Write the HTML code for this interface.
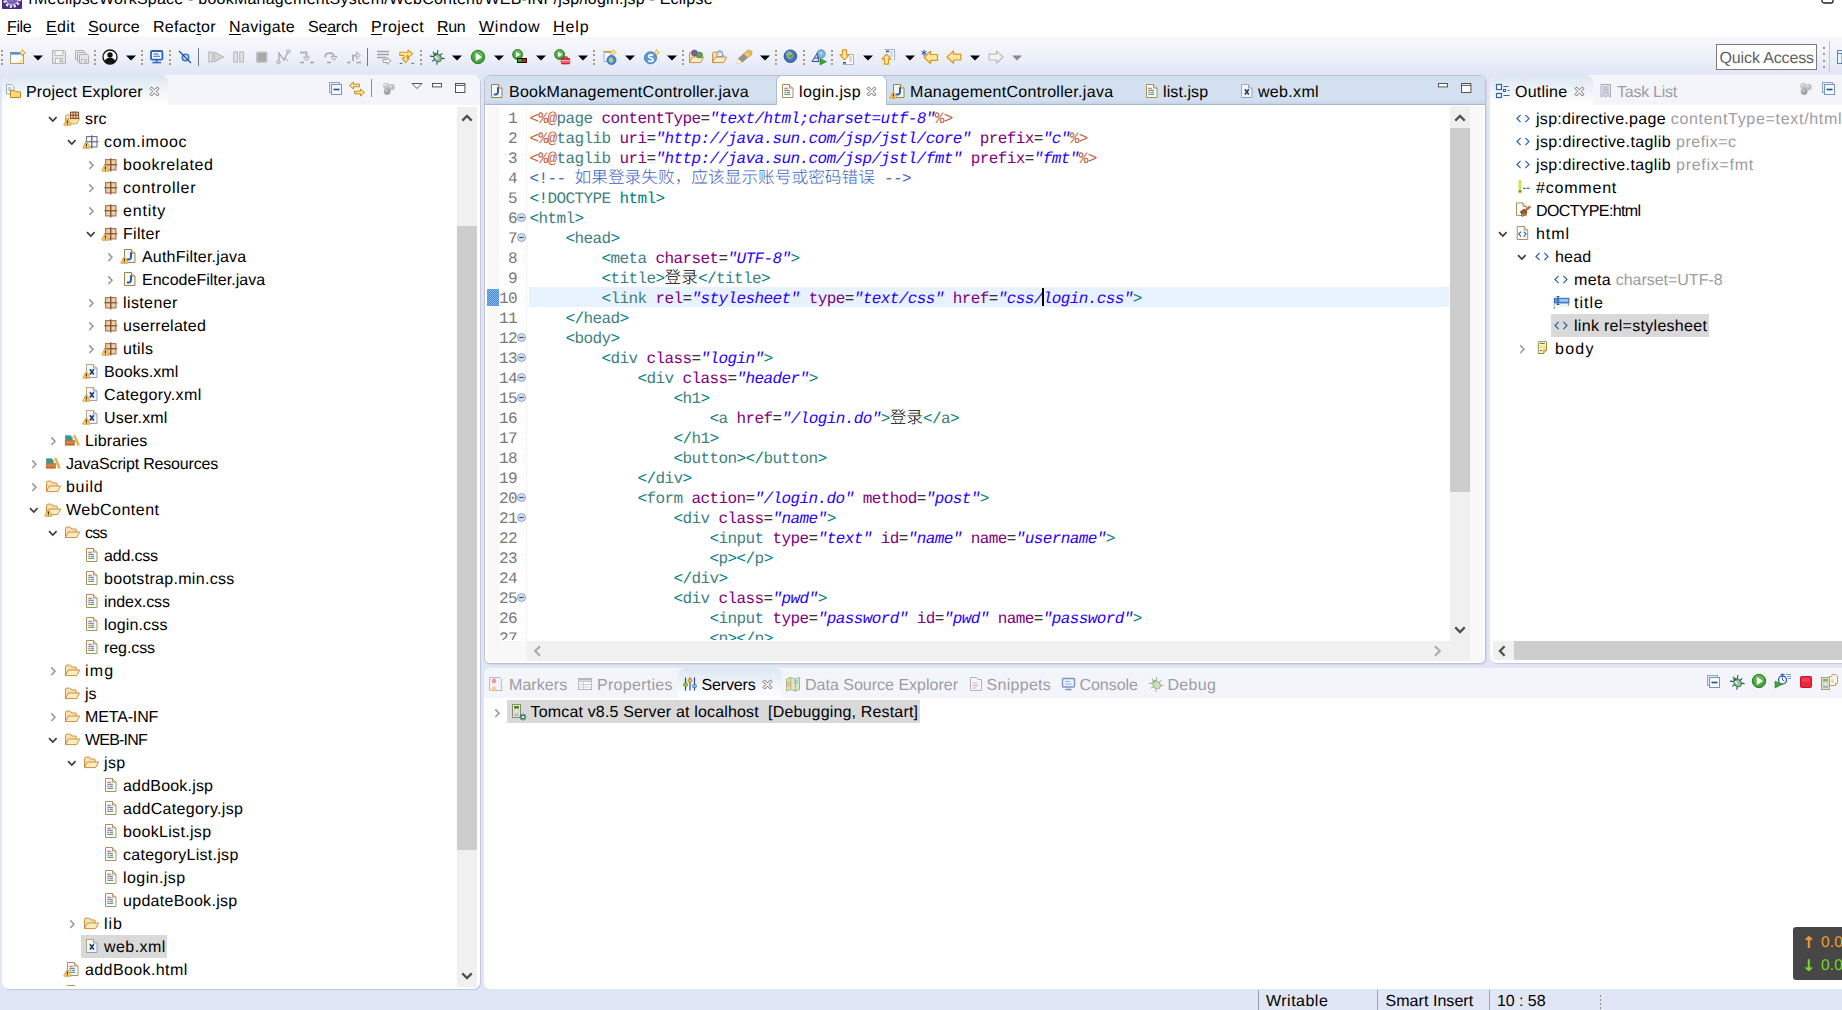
<!DOCTYPE html><html lang="zh"><head><meta charset="utf-8"><title>Eclipse</title><style>
*{box-sizing:border-box;margin:0;padding:0}
html,body{width:1842px;height:1010px;overflow:hidden}
body{background:#E1E6F6;font-family:"Liberation Sans","Noto Sans CJK SC",sans-serif;font-size:16px;letter-spacing:.1px;color:#000;position:relative;text-rendering:geometricPrecision}
.a{position:absolute}
.t{position:absolute;white-space:pre;line-height:20px;height:20px}
.g{color:#9C9CA2}
.ic{position:absolute;width:16px;height:16px;overflow:visible}
svg{display:block;overflow:visible}
u{text-decoration:underline;text-underline-offset:2px;text-decoration-thickness:1px}
.code{position:absolute;left:529.5px;white-space:pre;font-family:"Liberation Mono","Noto Sans CJK SC",monospace;font-size:16px;letter-spacing:-.6px;line-height:20px;height:20px}
.ln{position:absolute;left:487px;width:30px;text-align:right;font-family:"Liberation Mono","Noto Sans CJK SC",monospace;font-size:16px;letter-spacing:-.6px;line-height:20px;height:20px;color:#787878}
.d{color:#BF5F3F} .n{color:#3F7F7F} .k{color:#7F007F} .v{color:#2A00FF;font-style:italic} .b{color:#008080} .c{color:#3F5FBF}
.cj{font-family:"Liberation Mono","Noto Sans CJK SC",sans-serif;font-size:16.7px;letter-spacing:0;font-weight:300}
</style></head><body>
<div class="a" style="left:0px;top:0px;width:1842px;height:37px;background:#fff"></div>
<div class="a" style="left:2px;top:-9px;width:20px;height:18px"><svg width="20" height="18" viewBox="0 0 20 18"><rect x="0" y="0" width="20" height="18" rx="1" fill="#4B2E83"/><circle cx="10" cy="8" r="7.6" fill="none" stroke="#F2F0F8" stroke-width="2.6" stroke-dasharray="2.2 1.78"/><circle cx="10" cy="8" r="6.4" fill="#D8D3EA"/><circle cx="10" cy="8" r="5.6" fill="#7A64B4"/><circle cx="9" cy="6.5" r="3.4" fill="#9A88CC" opacity=".7"/></svg></div>
<div class="t " style="left:28.5px;top:-10.5px;font-size:16px;letter-spacing:0.225px;">rMeclipseWorkSpace - bookManagementSystem/WebContent/WEB-INF/jsp/login.jsp - Eclipse</div>
<div class="a" style="left:1821px;top:-8px;width:14px;height:12px"><svg width="14" height="12" viewBox="0 0 14 12"><rect x="1" y="1" width="11" height="10" rx="2" fill="#fff" stroke="#222" stroke-width="1.3"/></svg></div>
<div class="t " style="left:7px;top:17.5px;;letter-spacing:-0.399px;"><u>F</u>ile</div>
<div class="t " style="left:46px;top:17.5px;;letter-spacing:0.341px;"><u>E</u>dit</div>
<div class="t " style="left:88px;top:17.5px;;letter-spacing:0.179px;"><u>S</u>ource</div>
<div class="t " style="left:153px;top:17.5px;;letter-spacing:0.302px;">Refac<u>t</u>or</div>
<div class="t " style="left:229px;top:17.5px;;letter-spacing:0.349px;"><u>N</u>avigate</div>
<div class="t " style="left:308px;top:17.5px;;letter-spacing:-0.224px;">Se<u>a</u>rch</div>
<div class="t " style="left:371px;top:17.5px;;letter-spacing:0.467px;"><u>P</u>roject</div>
<div class="t " style="left:437px;top:17.5px;;letter-spacing:-0.38px;"><u>R</u>un</div>
<div class="t " style="left:479px;top:17.5px;;letter-spacing:0.736px;"><u>W</u>indow</div>
<div class="t " style="left:553px;top:17.5px;;letter-spacing:0.893px;"><u>H</u>elp</div>
<div class="a" style="left:0px;top:37px;width:1842px;height:38px;background:linear-gradient(#F6F7FC,#F3F5FB 30%,#E1E6F6)"></div>
<div class="a" style="left:1px;top:50px;width:2px;height:16px;background:repeating-linear-gradient(#A89B7E 0 2px,transparent 2px 4.35px)"></div>
<div class="a" style="left:10px;top:49px;width:16px;height:16px"><svg width="16" height="16" viewBox="0 0 16 16"><rect x="0.5" y="3.5" width="13" height="11" fill="#FDFEFF" stroke="#B89F62" stroke-width="1"/><rect x="0.5" y="3.2" width="13" height="2.4" fill="#4A90D9"/><path d="M3 14c5-.5 9-3 10-8v8Z" fill="#FBE9B0"/><path d="M12.5 0.5l1 2.3 2.3 1-2.3 1-1 2.3-1-2.3-2.3-1 2.3-1Z" fill="#FFF6C8" stroke="#D9A21B" stroke-width=".9"/></svg></div>
<div class="a" style="left:33px;top:55px;width:10px;height:6px"><svg width="10" height="6" viewBox="0 0 10 6"><path d="M0 0.5h10L5 5.5Z" fill="#000"/></svg></div>
<div class="a" style="left:51px;top:49px;width:16px;height:16px"><svg width="16" height="16" viewBox="0 0 16 16"><path d="M1.5 1.5h12l1 1v12h-13Z" fill="#E6E6E6" stroke="#B2B2B2" stroke-width="1"/><rect x="4" y="1.5" width="8" height="5" fill="#F4F4F4" stroke="#B2B2B2" stroke-width=".8"/><rect x="4.5" y="9.5" width="7" height="5" fill="#F4F4F4" stroke="#B2B2B2" stroke-width=".8"/><rect x="8.5" y="10.5" width="2" height="3" fill="#B2B2B2"/></svg></div>
<div class="a" style="left:74px;top:49px;width:16px;height:16px"><svg width="16" height="16" viewBox="0 0 16 16"><path d="M1.5 1.5h8l1 1v8h-9Z" fill="#E9E9E9" stroke="#B2B2B2" stroke-width="1"/><path d="M3.5 3.5h8l1 1v8h-9Z" fill="#E9E9E9" stroke="#B2B2B2" stroke-width="1"/><path d="M5.5 5.5h8l1 1v8h-9Z" fill="#E6E6E6" stroke="#B2B2B2" stroke-width="1"/><rect x="7.5" y="10.5" width="5" height="4" fill="#F4F4F4" stroke="#B2B2B2" stroke-width=".8"/><rect x="10" y="11.5" width="1.5" height="2.5" fill="#B2B2B2"/></svg></div>
<div class="a" style="left:94px;top:50px;width:2px;height:16px;background:repeating-linear-gradient(#A89B7E 0 2px,transparent 2px 4.35px)"></div>
<div class="a" style="left:102px;top:49px;width:16px;height:16px"><svg width="16" height="16" viewBox="0 0 16 16"><circle cx="8" cy="8" r="7" fill="#fff" stroke="#111" stroke-width="1.3"/><circle cx="8" cy="6" r="2.7" fill="#111"/><path d="M2.6 12.2c1-2.6 3-3.4 5.4-3.4s4.4.8 5.4 3.4c-1.4 1.8-3.2 2.6-5.4 2.6s-4-.8-5.4-2.6Z" fill="#111"/></svg></div>
<div class="a" style="left:126px;top:55px;width:10px;height:6px"><svg width="10" height="6" viewBox="0 0 10 6"><path d="M0 0.5h10L5 5.5Z" fill="#000"/></svg></div>
<div class="a" style="left:141px;top:50px;width:2px;height:16px;background:repeating-linear-gradient(#A89B7E 0 2px,transparent 2px 4.35px)"></div>
<div class="a" style="left:149px;top:49px;width:16px;height:16px"><svg width="16" height="16" viewBox="0 0 16 16"><rect x="2" y="2" width="11.4" height="8.6" rx="1.2" fill="#F4F8FF" stroke="#2F64B8" stroke-width="1.8"/><path d="M4.5 5h5M4.5 7.3h6.5" stroke="#2F64B8" stroke-width="1.1"/><path d="M7.7 10.6v2" stroke="#2F64B8" stroke-width="2"/><path d="M3.4 13.6h8.6" stroke="#2F64B8" stroke-width="1.5"/></svg></div>
<div class="a" style="left:169px;top:50px;width:2px;height:16px;background:repeating-linear-gradient(#A89B7E 0 2px,transparent 2px 4.35px)"></div>
<div class="a" style="left:177px;top:49px;width:16px;height:16px"><svg width="16" height="16" viewBox="0 0 16 16"><circle cx="8.5" cy="8.5" r="3.2" fill="#DCE8F8" stroke="#3C78C0" stroke-width="1.6"/><path d="M2 2l12 12" stroke="#2B4FA0" stroke-width="1.3"/></svg></div>
<div class="a" style="left:198px;top:48px;width:1px;height:18px;background:#767687"></div>
<div class="a" style="left:208px;top:49px;width:16px;height:16px"><svg width="16" height="16" viewBox="0 0 16 16"><rect x="0.8" y="3" width="3.4" height="10" fill="#E4E4E4" stroke="#B2B2B2" stroke-width="1"/><path d="M6 3l9.5 5L6 13Z" fill="#D5D5D5" stroke="#B2B2B2" stroke-width="1"/></svg></div>
<div class="a" style="left:233px;top:49px;width:12px;height:16px"><svg width="12" height="16" viewBox="0 0 12 16"><rect x="0.8" y="3" width="3.6" height="10" fill="#E4E4E4" stroke="#B2B2B2" stroke-width="1"/><rect x="6.8" y="3" width="3.6" height="10" fill="#E4E4E4" stroke="#B2B2B2" stroke-width="1"/></svg></div>
<div class="a" style="left:256px;top:49px;width:12px;height:16px"><svg width="12" height="16" viewBox="0 0 12 16"><rect x="0.8" y="3.3" width="10" height="10" rx="1" fill="#A9A9A9" stroke="#C4C4C4" stroke-width="1.4"/></svg></div>
<div class="a" style="left:276px;top:49px;width:16px;height:16px"><svg width="16" height="16" viewBox="0 0 16 16"><path d="M3 12V4l5 7 4-8" fill="none" stroke="#A2A2A2" stroke-width="1.2"/><circle cx="2.5" cy="13" r="1.8" fill="#D8D8D8" stroke="#A2A2A2" stroke-width=".8"/><circle cx="12.5" cy="2.5" r="1.8" fill="#D8D8D8" stroke="#A2A2A2" stroke-width=".8"/><path d="M9 9l3 3" stroke="#A2A2A2" stroke-width="1"/></svg></div>
<div class="a" style="left:299px;top:49px;width:16px;height:16px"><svg width="16" height="16" viewBox="0 0 16 16"><path d="M1 3.5h6.5v5" fill="none" stroke="#B2B2B2" stroke-width="2"/><path d="M4.5 8h6l-3 4Z" fill="#E4E4E4" stroke="#B2B2B2" stroke-width="1"/><path d="M1 13.5h4M11 13.5h4" stroke="#A2A2A2" stroke-width="1.4"/></svg></div>
<div class="a" style="left:323px;top:49px;width:16px;height:16px"><svg width="16" height="16" viewBox="0 0 16 16"><path d="M2 8.5c0-6 9-6 9-.5" fill="none" stroke="#B2B2B2" stroke-width="2"/><path d="M8 7.5h6l-3 4Z" fill="#E4E4E4" stroke="#B2B2B2" stroke-width="1"/><path d="M4 13.5h4" stroke="#A2A2A2" stroke-width="1.4"/></svg></div>
<div class="a" style="left:346px;top:49px;width:16px;height:16px"><svg width="16" height="16" viewBox="0 0 16 16"><path d="M7 12V6.5h4" fill="none" stroke="#B2B2B2" stroke-width="2"/><path d="M10.5 3l4 3.5-4 3.5Z" fill="#E4E4E4" stroke="#B2B2B2" stroke-width="1"/><path d="M1 13.5h3.5M10.5 13.5h4.5" stroke="#A2A2A2" stroke-width="1.4"/></svg></div>
<div class="a" style="left:367px;top:48px;width:1px;height:18px;background:#767687"></div>
<div class="a" style="left:376px;top:49px;width:16px;height:16px"><svg width="16" height="16" viewBox="0 0 16 16"><path d="M1 2.5h12M1 5.5h12M1 8.5h9" stroke="#A2A2A2" stroke-width="1.5"/><path d="M7 10.5h4V8.5l4 3.5-4 3.5v-2H7Z" fill="#F4F4F4" stroke="#A2A2A2" stroke-width="1"/></svg></div>
<div class="a" style="left:399px;top:49px;width:16px;height:16px"><svg width="16" height="16" viewBox="0 0 16 16"><path d="M0.8 3.2h8.2V1l4.6 3.8L9 8.6V6.4H8.1v2.8h2.2L6.6 13.6 2.9 9.2h2.2V6.4H0.8Z" fill="#FCE7A6" stroke="#D9981E" stroke-width="1.1" stroke-linejoin="round"/><path d="M0.3 14.8q1.6-2 3.4 0ZM12 14.8q1.6-2 3.4 0Z" fill="#2B4FA0"/></svg></div>
<div class="a" style="left:420px;top:50px;width:2px;height:16px;background:repeating-linear-gradient(#A89B7E 0 2px,transparent 2px 4.35px)"></div>
<div class="a" style="left:429px;top:49px;width:16px;height:16px"><svg width="16" height="16" viewBox="0 0 16 16"><g transform="rotate(-38 8 8)"><path d="M3 3l3 3M13 3l-3 3M1.5 8.5h3.5M14.5 8.5H11M3 14l3-3M13 14l-3-3M8 1.5v3" stroke="#1F5A55" stroke-width="1.1"/><ellipse cx="8" cy="9" rx="3.3" ry="4.3" fill="#9DBF8E" stroke="#2F6B5E" stroke-width="1"/><circle cx="8" cy="4.8" r="1.6" fill="#2F6B5E"/><ellipse cx="7" cy="8" rx="1.2" ry="2.2" fill="#D7F0C8"/></g></svg></div>
<div class="a" style="left:451.5px;top:55px;width:10px;height:6px"><svg width="10" height="6" viewBox="0 0 10 6"><path d="M0 0.5h10L5 5.5Z" fill="#000"/></svg></div>
<div class="a" style="left:470px;top:49px;width:16px;height:16px"><svg width="16" height="16" viewBox="0 0 16 16"><circle cx="8" cy="8" r="6.7" fill="#46A33C" stroke="#2B7A2B" stroke-width="1"/><circle cx="8" cy="6.6" r="4.7" fill="#7BCF63" opacity=".5"/><path d="M5.8 3.7L12 8l-6.2 4.3Z" fill="#fff"/></svg></div>
<div class="a" style="left:493.5px;top:55px;width:10px;height:6px"><svg width="10" height="6" viewBox="0 0 10 6"><path d="M0 0.5h10L5 5.5Z" fill="#000"/></svg></div>
<div class="a" style="left:511px;top:49px;width:18px;height:16px"><svg width="18" height="16" viewBox="0 0 18 16"><circle cx="6.6" cy="5.5" r="5" fill="#46A33C" stroke="#2B7A2B" stroke-width=".9"/><circle cx="6.6" cy="4.6" r="3.4" fill="#7BCF63" opacity=".5"/><path d="M5 2.8L9.6 5.5 5 8.2Z" fill="#fff"/><rect x="6" y="9" width="10" height="5" fill="#111"/><rect x="7" y="10" width="3.8" height="3" fill="#1FB82A"/><rect x="11.3" y="10" width="3.8" height="3" fill="#E8141C"/></svg></div>
<div class="a" style="left:535.5px;top:55px;width:10px;height:6px"><svg width="10" height="6" viewBox="0 0 10 6"><path d="M0 0.5h10L5 5.5Z" fill="#000"/></svg></div>
<div class="a" style="left:553px;top:49px;width:18px;height:16px"><svg width="18" height="16" viewBox="0 0 18 16"><circle cx="6.6" cy="5.5" r="5" fill="#46A33C" stroke="#2B7A2B" stroke-width=".9"/><circle cx="6.6" cy="4.6" r="3.4" fill="#7BCF63" opacity=".5"/><path d="M5 2.8L9.6 5.5 5 8.2Z" fill="#fff"/><rect x="8.3" y="9.3" width="8.4" height="5.6" rx="1" fill="#E8283C" stroke="#B8101E" stroke-width=".8"/><path d="M10.8 9.3v-1.4h3.4v1.4" fill="none" stroke="#B8101E" stroke-width="1"/><path d="M8.3 11.6h8.4" stroke="#fff" stroke-width=".8"/><path d="M8.3 13.2h8.4" stroke="#fff" stroke-width=".5"/></svg></div>
<div class="a" style="left:577.5px;top:55px;width:10px;height:6px"><svg width="10" height="6" viewBox="0 0 10 6"><path d="M0 0.5h10L5 5.5Z" fill="#000"/></svg></div>
<div class="a" style="left:593px;top:50px;width:2px;height:16px;background:repeating-linear-gradient(#A89B7E 0 2px,transparent 2px 4.35px)"></div>
<div class="a" style="left:601px;top:49px;width:16px;height:16px"><svg width="16" height="16" viewBox="0 0 16 16"><path d="M3 3.5h7v9H3Z" fill="#F4F7FD" stroke="#9FB2D4" stroke-width="1" rx="2"/><path d="M2 2.5h8" stroke="#D9A21B" stroke-width="1.2"/><circle cx="10.5" cy="11" r="4.5" fill="#4F86D8" stroke="#2F5FA8" stroke-width=".8"/><path d="M8 9.5c1-1.5 3-1 3.5 0s1.5 2 0 3.5-3 .5-3.5-1Z" fill="#A6D86C"/><path d="M12.5 0.5l.9 2 2 .9-2 .9-.9 2-.9-2-2-.9 2-.9Z" fill="#FFF2B0" stroke="#D9A21B" stroke-width=".7"/></svg></div>
<div class="a" style="left:624.5px;top:55px;width:10px;height:6px"><svg width="10" height="6" viewBox="0 0 10 6"><path d="M0 0.5h10L5 5.5Z" fill="#000"/></svg></div>
<div class="a" style="left:644px;top:49px;width:16px;height:16px"><svg width="16" height="16" viewBox="0 0 16 16"><circle cx="6.5" cy="8.8" r="6.1" fill="#5A9AD8" stroke="#3A78B8" stroke-width=".8"/><path d="M8.9 6.6c-1-1-4.3-1.1-4.3.9 0 1.9 4.5 1.2 4.5 3.3 0 2.1-3.8 1.9-4.9.8" fill="none" stroke="#fff" stroke-width="1.7"/><path d="M12.6 0.6l.9 2 2 .9-2 .9-.9 2-.9-2-2-.9 2-.9Z" fill="#FFF6C8" stroke="#D9A21B" stroke-width=".8"/></svg></div>
<div class="a" style="left:666.5px;top:55px;width:10px;height:6px"><svg width="10" height="6" viewBox="0 0 10 6"><path d="M0 0.5h10L5 5.5Z" fill="#000"/></svg></div>
<div class="a" style="left:682px;top:50px;width:2px;height:16px;background:repeating-linear-gradient(#A89B7E 0 2px,transparent 2px 4.35px)"></div>
<div class="a" style="left:687px;top:49px;width:18px;height:16px"><svg width="18" height="16" viewBox="0 0 18 16"><path d="M2.5 13.5V4.7q0-1.6 1.6-1.6h2.6q1 0 1.5.9l.6 1h3.4q1.1 0 1.1 1.1V8" fill="#F9E2AF" stroke="#CF8F3F" stroke-width="1" stroke-linejoin="round"/><path d="M2.4 13.6L5.4 8H16.7L13.6 13.6Z" fill="#FCEBC3" stroke="#CF8F3F" stroke-width="1" stroke-linejoin="round"/><circle cx="7.5" cy="4" r="3" fill="#7A5DB0" stroke="#523A85" stroke-width=".6"/><circle cx="12.5" cy="6" r="3" fill="#5FA35A" stroke="#36743A" stroke-width=".6"/></svg></div>
<div class="a" style="left:710px;top:49px;width:18px;height:16px"><svg width="18" height="16" viewBox="0 0 18 16"><path d="M2.5 13.5V4.7q0-1.6 1.6-1.6h2.6q1 0 1.5.9l.6 1h3.4q1.1 0 1.1 1.1V8" fill="#F9E2AF" stroke="#CF8F3F" stroke-width="1" stroke-linejoin="round"/><path d="M2.4 13.6L5.4 8H16.7L13.6 13.6Z" fill="#FCEBC3" stroke="#CF8F3F" stroke-width="1" stroke-linejoin="round"/><rect x="7" y="3" width="5.5" height="4.5" fill="#E4E9F4" stroke="#8A96B4" stroke-width=".9"/><path d="M8.5 3V1.8h2.5V3" fill="none" stroke="#8A96B4" stroke-width=".9"/></svg></div>
<div class="a" style="left:735px;top:49px;width:18px;height:16px"><svg width="18" height="16" viewBox="0 0 18 16"><path d="M1 15l2.5-5.5 4 3.5Z" fill="#FFF7D8" stroke="#E6CF8A" stroke-width=".6"/><path d="M3.5 9.5l5-4.5 4 3.5-5 4.5Z" fill="#9A948A" stroke="#77716A" stroke-width=".6"/><path d="M8.5 5l5-4 3.5 1.5-.5 3.5-4 2.5Z" fill="#F2C879" stroke="#C58A2E" stroke-width=".8"/><path d="M12.5 3l2.5 1.5" stroke="#C58A2E" stroke-width=".8"/></svg></div>
<div class="a" style="left:759.5px;top:55px;width:10px;height:6px"><svg width="10" height="6" viewBox="0 0 10 6"><path d="M0 0.5h10L5 5.5Z" fill="#000"/></svg></div>
<div class="a" style="left:775px;top:50px;width:2px;height:16px;background:repeating-linear-gradient(#A89B7E 0 2px,transparent 2px 4.35px)"></div>
<div class="a" style="left:783px;top:49px;width:16px;height:16px"><svg width="16" height="16" viewBox="0 0 16 16"><circle cx="7.4" cy="7.2" r="6.3" fill="#3F78C8" stroke="#2A4E8A" stroke-width=".9"/><circle cx="6" cy="5" r="3" fill="#8FB6EA" opacity=".6"/><path d="M4.5 4.5c1.5-2 4-1.5 4.5 0s2 2.5 0 4.5-3.5 1-4.5-1-1-2 0-3.5Z" fill="#8FCB5A"/><path d="M6.3 5.8l1.2 3 1.2-3" fill="none" stroke="#C8401E" stroke-width="1"/></svg></div>
<div class="a" style="left:803px;top:50px;width:2px;height:16px;background:repeating-linear-gradient(#A89B7E 0 2px,transparent 2px 4.35px)"></div>
<div class="a" style="left:811px;top:49px;width:16px;height:16px"><svg width="16" height="16" viewBox="0 0 16 16"><circle cx="10" cy="5" r="4.2" fill="#7FB2E8" stroke="#4C7FC0" stroke-width=".8"/><path d="M8.5 3.5c1-1.2 2.6-.8 3 .4s-.6 2.6-2 2.4Z" fill="#B6DD8A"/><path d="M1 12.5l5-8 2 8Z" fill="#DDE6F8" stroke="#2B4FA0" stroke-width="1"/><path d="M3 9h5" stroke="#2B4FA0" stroke-width="1"/><path d="M9 9.5l6.5 3.2L9 16Z" fill="#3FA535" stroke="#1E7A1E" stroke-width=".6"/></svg></div>
<div class="a" style="left:831px;top:50px;width:2px;height:16px;background:repeating-linear-gradient(#A89B7E 0 2px,transparent 2px 4.35px)"></div>
<div class="a" style="left:839px;top:49px;width:16px;height:16px"><svg width="16" height="16" viewBox="0 0 16 16"><path d="M5.5 5.5h9v10h-11" fill="#FAFCFF" stroke="#9FB2D4" stroke-width="1"/><path d="M10 8h3M10 10h3M10 12h3" stroke="#9FB2D4" stroke-width=".9"/><rect x="4" y="13" width="3" height="1.6" fill="#2B4FA0"/><path d="M3.5 0.8h4v5h2.5l-4.5 5-4.5-5h2.5Z" fill="#FCE7A6" stroke="#D9981E" stroke-width="1.2" stroke-linejoin="round"/></svg></div>
<div class="a" style="left:862.5px;top:55px;width:10px;height:6px"><svg width="10" height="6" viewBox="0 0 10 6"><path d="M0 0.5h10L5 5.5Z" fill="#000"/></svg></div>
<div class="a" style="left:881px;top:49px;width:16px;height:16px"><svg width="16" height="16" viewBox="0 0 16 16"><path d="M3.5 0.5h10v11" fill="#FAFCFF" stroke="#9FB2D4" stroke-width="1"/><path d="M8.5 3h3.5M8.5 5h3.5M8.5 7h3.5" stroke="#9FB2D4" stroke-width=".9"/><rect x="5" y="1.6" width="3" height="1.6" fill="#2B4FA0"/><path d="M3.5 15.2h4v-5h2.5l-4.5-5-4.5 5h2.5Z" fill="#FCE7A6" stroke="#D9981E" stroke-width="1.2" stroke-linejoin="round"/></svg></div>
<div class="a" style="left:904.5px;top:55px;width:10px;height:6px"><svg width="10" height="6" viewBox="0 0 10 6"><path d="M0 0.5h10L5 5.5Z" fill="#000"/></svg></div>
<div class="a" style="left:921px;top:49px;width:18px;height:16px"><svg width="18" height="16" viewBox="0 0 18 16"><path d="M3 8.3L9.5 2.2V5.5h7v5.8h-7v3.2Z" fill="#FCE7A6" stroke="#D9981E" stroke-width="1.2" stroke-linejoin="round"/><path d="M3 0.8v6M0.5 2.3l5 3M5.5 2.3l-5 3" stroke="#2B4FA0" stroke-width="1"/></svg></div>
<div class="a" style="left:946px;top:49px;width:16px;height:16px"><svg width="16" height="16" viewBox="0 0 16 16"><path d="M1 8L7.5 1.9V5.2h7.3v5.8H7.5v3.2Z" fill="#FCE7A6" stroke="#D9981E" stroke-width="1.2" stroke-linejoin="round"/></svg></div>
<div class="a" style="left:969.5px;top:55px;width:10px;height:6px"><svg width="10" height="6" viewBox="0 0 10 6"><path d="M0 0.5h10L5 5.5Z" fill="#000"/></svg></div>
<div class="a" style="left:988px;top:49px;width:16px;height:16px"><svg width="16" height="16" viewBox="0 0 16 16"><path d="M15 8L8.5 1.9V5.2H1.2v5.8h7.3v3.2Z" fill="#F4F4F4" stroke="#BDBDBD" stroke-width="1.2" stroke-linejoin="round"/></svg></div>
<div class="a" style="left:1011.5px;top:55px;width:10px;height:6px"><svg width="10" height="6" viewBox="0 0 10 6"><path d="M0 0.5h10L5 5.5Z" fill="#8a8a8a"/></svg></div>
<div class="a" style="left:1823px;top:47px;width:2px;height:21px;background:repeating-linear-gradient(#A89B7E 0 2px,transparent 2px 6.3px)"></div>
<div class="a" style="left:1829px;top:41px;width:1px;height:31px;background:#C2C9DA"></div>
<div class="a" style="left:1837px;top:49px;width:16px;height:16px"><svg width="16" height="16" viewBox="0 0 16 16"><rect x="0.5" y="1.5" width="14" height="13" fill="#EEF3FB" stroke="#5F7FB8" stroke-width="1"/><path d="M0.5 4.5h14M5 4.5v10" stroke="#5F7FB8" stroke-width="1"/></svg></div>
<div class="a" style="left:1716px;top:44px;width:101px;height:26px;background:#fff;border:1px solid #7a7a7a"></div>
<div class="t " style="left:1719.5px;top:48.5px;color:#5f5f5f;letter-spacing:-0.13px;">Quick Access</div>
<div class="a" style="left:2px;top:75px;width:478px;height:914px;background:#fff;border-radius:7px 7px 7px 7px;box-shadow:1px 1px 1px rgba(150,160,190,.45)"></div>
<div class="a" style="left:2px;top:75px;width:478px;height:30px;background:#F4F5FB;border-radius:7px 7px 0 0"></div>
<div class="a" style="left:2px;top:75px;width:166px;height:30px;background:linear-gradient(#DCE6F1,#EDF2F8 45%,#fff);border-radius:7px 7px 0 0"></div>
<div class="a" style="left:484px;top:75px;width:1002px;height:589px;background:#fff;border-radius:6px;border:1px solid #C0C1C6;box-shadow:1px 1px 1px rgba(160,165,185,.25)"></div>
<div class="a" style="left:485px;top:76px;width:1000px;height:29px;background:linear-gradient(#D3E0EF 85%,#C4D3E6);border-radius:5px 5px 0 0;border-bottom:1px solid #A9B7CD"></div>
<div class="a" style="left:1490px;top:75px;width:360px;height:588px;background:#fff;border-radius:7px;box-shadow:1px 1px 1px rgba(150,160,190,.45)"></div>
<div class="a" style="left:1490px;top:75px;width:360px;height:30px;background:#F4F5FB;border-radius:7px 0 0 0"></div>
<div class="a" style="left:1490px;top:75px;width:103px;height:30px;background:linear-gradient(#DCE6F1,#EDF2F8 45%,#fff);border-radius:7px 7px 0 0"></div>
<div class="a" style="left:484px;top:668px;width:1366px;height:321px;background:#fff;border-radius:7px"></div>
<div class="a" style="left:484px;top:668px;width:1366px;height:30px;background:#F4F5FB;border-radius:7px 0 0 0"></div>
<div class="a" style="left:678px;top:668px;width:104px;height:30px;background:linear-gradient(#DCE6F1,#EDF2F8 45%,#fff);border-radius:7px 7px 0 0"></div>
<div class="a" style="left:4px;top:83px;width:18px;height:16px"><svg width="18" height="16" viewBox="0 0 18 16"><path d="M2.5 1.5h5l2.5 2.5v7h-7.5Z" fill="#fff" stroke="#9AA9C4" stroke-width="1"/><path d="M4 5h3M4 7h4" stroke="#7C97C9" stroke-width="1"/><path d="M6.5 14.5v-7h4l1 1.3h5v5.7Z" fill="#FAD97A" stroke="#C58A16" stroke-width="1" stroke-linejoin="round"/></svg></div>
<div class="t " style="left:26px;top:82.5px;;letter-spacing:0.185px;">Project Explorer</div>
<div class="a" style="left:149px;top:86px;width:12px;height:12px"><svg width="12" height="12" viewBox="0 0 12 12"><path d="M1 2.6L2.6 1L5.5 3.9L8.4 1L10 2.6L7.1 5.5L10 8.4L8.4 10L5.5 7.1L2.6 10L1 8.4L3.9 5.5Z" fill="#fff" stroke="#585858" stroke-width=".9" stroke-linejoin="round"/></svg></div>
<div class="a" style="left:327px;top:81px;width:16px;height:16px"><svg width="16" height="16" viewBox="0 0 16 16"><rect x="2.5" y="1.5" width="10" height="10" fill="#E8EEF8" stroke="#8FA5C7" stroke-width="1"/><rect x="4.5" y="3.5" width="10" height="10" fill="#F6F9FF" stroke="#7A93BC" stroke-width="1"/><path d="M6.5 8.5h6" stroke="#1F4E8C" stroke-width="1.6"/></svg></div>
<div class="a" style="left:348px;top:81px;width:18px;height:16px"><svg width="18" height="16" viewBox="0 0 18 16"><path d="M1.5 4.5L5.5 1v2.2h6v2.6h-6V8Z" fill="#FCE7A6" stroke="#C58A16" stroke-width="1" stroke-linejoin="round"/><path d="M16.5 11.5L12.5 8v2.2h-6v2.6h6V15Z" fill="#FCE7A6" stroke="#C58A16" stroke-width="1" stroke-linejoin="round"/></svg></div>
<div class="a" style="left:371px;top:79px;width:1px;height:18px;background:#8c8c9c"></div>
<div class="a" style="left:381px;top:81px;width:16px;height:16px"><svg width="16" height="16" viewBox="0 0 16 16"><circle cx="5.2" cy="4.8" r="3.1" fill="#C6C6C6"/><circle cx="4.4" cy="3.9" r="1.3" fill="#E2E2E2"/><circle cx="10.6" cy="6.2" r="3.1" fill="#BEBEBE"/><circle cx="9.8" cy="5.3" r="1.3" fill="#DCDCDC"/><circle cx="6.2" cy="10.6" r="3.4" fill="#A4A4A4"/><circle cx="5.3" cy="9.6" r="1.4" fill="#C8C8C8"/></svg></div>
<div class="a" style="left:411px;top:82px;width:12px;height:8px"><svg width="12" height="8" viewBox="0 0 12 8"><path d="M1 1.5h10L6 6.5Z" fill="#fff" stroke="#555" stroke-width="1"/></svg></div>
<div class="a" style="left:432px;top:83px;width:12px;height:6px"><svg width="12" height="6" viewBox="0 0 12 6"><rect x="0.5" y="0.5" width="9" height="3.4" fill="#fff" stroke="#555" stroke-width="1"/></svg></div>
<div class="a" style="left:455px;top:83px;width:12px;height:12px"><svg width="12" height="12" viewBox="0 0 12 12"><rect x="0.5" y="0.5" width="9.4" height="9" fill="#fff" stroke="#555" stroke-width="1"/><path d="M0.5 2.4h9.4" stroke="#555" stroke-width="1"/></svg></div>
<div class="a" style="left:2px;top:105px;width:455px;height:881px;overflow:hidden">
<div class="a" style="left:45px;top:8px;width:12px;height:10px"><svg width="12" height="10" viewBox="0 0 12 10"><path d="M2 4.2L5.8 8L9.6 4.2" fill="none" stroke="#3C3C3C" stroke-width="1.7"/></svg></div>
<div class="a" style="left:61px;top:5px;width:16px;height:16px"><svg width="18" height="16" viewBox="0 0 18 16"><path d="M2.5 13.5V6.2q0-1.2 1.2-1.2h3" fill="#F6DDA6" stroke="#D7A55B" stroke-width="1"/><path d="M2.4 13.8L5.6 8H17L13.6 13.8Z" fill="#F8DFA6" stroke="#D9A75C" stroke-width="1" stroke-linejoin="round"/><rect x="7.5" y="2.2" width="8" height="6.3" fill="#EED3A4" stroke="#8A4B32" stroke-width="1"/><path d="M10.2 1.4v7.4M12.8 1.4v7.4M6.8 5.2h9.4" stroke="#7C4A3A" stroke-width="1"/><path d="M1.3 15.3Q.4 15.3 .9 14.4L3.8 8.9Q4.4 7.9 5 8.9L7.9 14.4Q8.4 15.3 7.5 15.3Z" fill="#F7CC72" stroke="#D7A046" stroke-width=".9"/><path d="M4.4 10.4v2.5M4.4 13.6v.9" stroke="#3F2E05" stroke-width="1.1"/></svg></div>
<div class="t " style="left:83px;top:4.5px;;letter-spacing:0.136px;">src</div>
<div class="a" style="left:64px;top:31px;width:12px;height:10px"><svg width="12" height="10" viewBox="0 0 12 10"><path d="M2 4.2L5.8 8L9.6 4.2" fill="none" stroke="#3C3C3C" stroke-width="1.7"/></svg></div>
<div class="a" style="left:80px;top:28px;width:16px;height:16px"><svg width="17" height="16" viewBox="0 0 17 16"><rect x="4.5" y="3.5" width="10.5" height="10.5" fill="#E3ECF8" stroke="#6F7686" stroke-width="1"/><rect x="5.6" y="4.6" width="3.4" height="3.4" fill="#F4F8FD"/><rect x="10.6" y="4.6" width="3.4" height="3.4" fill="#F4F8FD"/><rect x="5.6" y="9.6" width="3.4" height="3.4" fill="#F4F8FD"/><rect x="10.6" y="9.6" width="3.4" height="3.4" fill="#F4F8FD"/><path d="M9.75 2.2v13.2M3.2 8.75h13.2" stroke="#5A6070" stroke-width="1.2"/><path d="M1.3 15.3Q.4 15.3 .9 14.4L3.8 8.9Q4.4 7.9 5 8.9L7.9 14.4Q8.4 15.3 7.5 15.3Z" fill="#F7CC72" stroke="#D7A046" stroke-width=".9"/><path d="M4.4 10.4v2.5M4.4 13.6v.9" stroke="#3F2E05" stroke-width="1.1"/></svg></div>
<div class="t " style="left:102px;top:27.5px;;letter-spacing:0.655px;">com.imooc</div>
<div class="a" style="left:84px;top:53px;width:10px;height:12px"><svg width="10" height="12" viewBox="0 0 10 12"><path d="M3.3 3.4L7 7.2L3.3 11" fill="none" stroke="#9A9A9A" stroke-width="1.6"/></svg></div>
<div class="a" style="left:99px;top:51px;width:16px;height:16px"><svg width="17" height="16" viewBox="0 0 17 16"><rect x="4.5" y="3.5" width="10.5" height="10.5" fill="#D9B27C" stroke="#A9775A" stroke-width="1"/><rect x="5.6" y="4.6" width="3.4" height="3.4" fill="#EBD2A4"/><rect x="10.6" y="4.6" width="3.4" height="3.4" fill="#EBD2A4"/><rect x="5.6" y="9.6" width="3.4" height="3.4" fill="#EBD2A4"/><rect x="10.6" y="9.6" width="3.4" height="3.4" fill="#EBD2A4"/><path d="M9.75 2.2v13.2M3.2 8.75h13.2" stroke="#7C4A3A" stroke-width="1.2"/><path d="M1.3 15.3Q.4 15.3 .9 14.4L3.8 8.9Q4.4 7.9 5 8.9L7.9 14.4Q8.4 15.3 7.5 15.3Z" fill="#F7CC72" stroke="#D7A046" stroke-width=".9"/><path d="M4.4 10.4v2.5M4.4 13.6v.9" stroke="#3F2E05" stroke-width="1.1"/></svg></div>
<div class="t " style="left:121px;top:50.5px;;letter-spacing:0.638px;">bookrelated</div>
<div class="a" style="left:84px;top:76px;width:10px;height:12px"><svg width="10" height="12" viewBox="0 0 10 12"><path d="M3.3 3.4L7 7.2L3.3 11" fill="none" stroke="#9A9A9A" stroke-width="1.6"/></svg></div>
<div class="a" style="left:99px;top:74px;width:16px;height:16px"><svg width="17" height="16" viewBox="0 0 17 16"><rect x="4.5" y="3.5" width="10.5" height="10.5" fill="#D9B27C" stroke="#A9775A" stroke-width="1"/><rect x="5.6" y="4.6" width="3.4" height="3.4" fill="#EBD2A4"/><rect x="10.6" y="4.6" width="3.4" height="3.4" fill="#EBD2A4"/><rect x="5.6" y="9.6" width="3.4" height="3.4" fill="#EBD2A4"/><rect x="10.6" y="9.6" width="3.4" height="3.4" fill="#EBD2A4"/><path d="M9.75 2.2v13.2M3.2 8.75h13.2" stroke="#7C4A3A" stroke-width="1.2"/></svg></div>
<div class="t " style="left:121px;top:73.5px;;letter-spacing:0.754px;">controller</div>
<div class="a" style="left:84px;top:99px;width:10px;height:12px"><svg width="10" height="12" viewBox="0 0 10 12"><path d="M3.3 3.4L7 7.2L3.3 11" fill="none" stroke="#9A9A9A" stroke-width="1.6"/></svg></div>
<div class="a" style="left:99px;top:97px;width:16px;height:16px"><svg width="17" height="16" viewBox="0 0 17 16"><rect x="4.5" y="3.5" width="10.5" height="10.5" fill="#D9B27C" stroke="#A9775A" stroke-width="1"/><rect x="5.6" y="4.6" width="3.4" height="3.4" fill="#EBD2A4"/><rect x="10.6" y="4.6" width="3.4" height="3.4" fill="#EBD2A4"/><rect x="5.6" y="9.6" width="3.4" height="3.4" fill="#EBD2A4"/><rect x="10.6" y="9.6" width="3.4" height="3.4" fill="#EBD2A4"/><path d="M9.75 2.2v13.2M3.2 8.75h13.2" stroke="#7C4A3A" stroke-width="1.2"/></svg></div>
<div class="t " style="left:121px;top:96.5px;;letter-spacing:0.81px;">entity</div>
<div class="a" style="left:83px;top:123px;width:12px;height:10px"><svg width="12" height="10" viewBox="0 0 12 10"><path d="M2 4.2L5.8 8L9.6 4.2" fill="none" stroke="#3C3C3C" stroke-width="1.7"/></svg></div>
<div class="a" style="left:99px;top:120px;width:16px;height:16px"><svg width="17" height="16" viewBox="0 0 17 16"><rect x="4.5" y="3.5" width="10.5" height="10.5" fill="#D9B27C" stroke="#A9775A" stroke-width="1"/><rect x="5.6" y="4.6" width="3.4" height="3.4" fill="#EBD2A4"/><rect x="10.6" y="4.6" width="3.4" height="3.4" fill="#EBD2A4"/><rect x="5.6" y="9.6" width="3.4" height="3.4" fill="#EBD2A4"/><rect x="10.6" y="9.6" width="3.4" height="3.4" fill="#EBD2A4"/><path d="M9.75 2.2v13.2M3.2 8.75h13.2" stroke="#7C4A3A" stroke-width="1.2"/><path d="M1.3 15.3Q.4 15.3 .9 14.4L3.8 8.9Q4.4 7.9 5 8.9L7.9 14.4Q8.4 15.3 7.5 15.3Z" fill="#F7CC72" stroke="#D7A046" stroke-width=".9"/><path d="M4.4 10.4v2.5M4.4 13.6v.9" stroke="#3F2E05" stroke-width="1.1"/></svg></div>
<div class="t " style="left:121px;top:119.5px;;letter-spacing:0.307px;">Filter</div>
<div class="a" style="left:103px;top:145px;width:10px;height:12px"><svg width="10" height="12" viewBox="0 0 10 12"><path d="M3.3 3.4L7 7.2L3.3 11" fill="none" stroke="#9A9A9A" stroke-width="1.6"/></svg></div>
<div class="a" style="left:118px;top:143px;width:16px;height:16px"><svg width="16" height="16" viewBox="0 0 16 16"><path d="M4.5 1.5h7l3.5 3.5v9.5h-10.5Z" fill="#F3F7FD" stroke="#9C8347" stroke-width="1" stroke-linejoin="round"/><path d="M11.5 1.5v3.5h3.5" fill="#F4E9C8" stroke="#9C8347" stroke-width="1" stroke-linejoin="round"/><path d="M11 4.2v4.6c0 2.2-1.6 3-4.2 2.6" fill="none" stroke="#2F5D9E" stroke-width="2"/><path d="M1.3 15.3Q.4 15.3 .9 14.4L3.8 8.9Q4.4 7.9 5 8.9L7.9 14.4Q8.4 15.3 7.5 15.3Z" fill="#F7CC72" stroke="#D7A046" stroke-width=".9"/><path d="M4.4 10.4v2.5M4.4 13.6v.9" stroke="#3F2E05" stroke-width="1.1"/></svg></div>
<div class="t " style="left:140px;top:142.5px;;letter-spacing:0.194px;">AuthFilter.java</div>
<div class="a" style="left:103px;top:168px;width:10px;height:12px"><svg width="10" height="12" viewBox="0 0 10 12"><path d="M3.3 3.4L7 7.2L3.3 11" fill="none" stroke="#9A9A9A" stroke-width="1.6"/></svg></div>
<div class="a" style="left:118px;top:166px;width:16px;height:16px"><svg width="16" height="16" viewBox="0 0 16 16"><path d="M4.5 1.5h7l3.5 3.5v9.5h-10.5Z" fill="#F3F7FD" stroke="#9C8347" stroke-width="1" stroke-linejoin="round"/><path d="M11.5 1.5v3.5h3.5" fill="#F4E9C8" stroke="#9C8347" stroke-width="1" stroke-linejoin="round"/><path d="M11 4.2v4.6c0 2.2-1.6 3-4.2 2.6" fill="none" stroke="#2F5D9E" stroke-width="2"/></svg></div>
<div class="t " style="left:140px;top:165.5px;;letter-spacing:0.023px;">EncodeFilter.java</div>
<div class="a" style="left:84px;top:191px;width:10px;height:12px"><svg width="10" height="12" viewBox="0 0 10 12"><path d="M3.3 3.4L7 7.2L3.3 11" fill="none" stroke="#9A9A9A" stroke-width="1.6"/></svg></div>
<div class="a" style="left:99px;top:189px;width:16px;height:16px"><svg width="17" height="16" viewBox="0 0 17 16"><rect x="4.5" y="3.5" width="10.5" height="10.5" fill="#D9B27C" stroke="#A9775A" stroke-width="1"/><rect x="5.6" y="4.6" width="3.4" height="3.4" fill="#EBD2A4"/><rect x="10.6" y="4.6" width="3.4" height="3.4" fill="#EBD2A4"/><rect x="5.6" y="9.6" width="3.4" height="3.4" fill="#EBD2A4"/><rect x="10.6" y="9.6" width="3.4" height="3.4" fill="#EBD2A4"/><path d="M9.75 2.2v13.2M3.2 8.75h13.2" stroke="#7C4A3A" stroke-width="1.2"/></svg></div>
<div class="t " style="left:121px;top:188.5px;;letter-spacing:0.389px;">listener</div>
<div class="a" style="left:84px;top:214px;width:10px;height:12px"><svg width="10" height="12" viewBox="0 0 10 12"><path d="M3.3 3.4L7 7.2L3.3 11" fill="none" stroke="#9A9A9A" stroke-width="1.6"/></svg></div>
<div class="a" style="left:99px;top:212px;width:16px;height:16px"><svg width="17" height="16" viewBox="0 0 17 16"><rect x="4.5" y="3.5" width="10.5" height="10.5" fill="#D9B27C" stroke="#A9775A" stroke-width="1"/><rect x="5.6" y="4.6" width="3.4" height="3.4" fill="#EBD2A4"/><rect x="10.6" y="4.6" width="3.4" height="3.4" fill="#EBD2A4"/><rect x="5.6" y="9.6" width="3.4" height="3.4" fill="#EBD2A4"/><rect x="10.6" y="9.6" width="3.4" height="3.4" fill="#EBD2A4"/><path d="M9.75 2.2v13.2M3.2 8.75h13.2" stroke="#7C4A3A" stroke-width="1.2"/></svg></div>
<div class="t " style="left:121px;top:211.5px;;letter-spacing:0.285px;">userrelated</div>
<div class="a" style="left:84px;top:237px;width:10px;height:12px"><svg width="10" height="12" viewBox="0 0 10 12"><path d="M3.3 3.4L7 7.2L3.3 11" fill="none" stroke="#9A9A9A" stroke-width="1.6"/></svg></div>
<div class="a" style="left:99px;top:235px;width:16px;height:16px"><svg width="17" height="16" viewBox="0 0 17 16"><rect x="4.5" y="3.5" width="10.5" height="10.5" fill="#D9B27C" stroke="#A9775A" stroke-width="1"/><rect x="5.6" y="4.6" width="3.4" height="3.4" fill="#EBD2A4"/><rect x="10.6" y="4.6" width="3.4" height="3.4" fill="#EBD2A4"/><rect x="5.6" y="9.6" width="3.4" height="3.4" fill="#EBD2A4"/><rect x="10.6" y="9.6" width="3.4" height="3.4" fill="#EBD2A4"/><path d="M9.75 2.2v13.2M3.2 8.75h13.2" stroke="#7C4A3A" stroke-width="1.2"/><path d="M1.3 15.3Q.4 15.3 .9 14.4L3.8 8.9Q4.4 7.9 5 8.9L7.9 14.4Q8.4 15.3 7.5 15.3Z" fill="#F7CC72" stroke="#D7A046" stroke-width=".9"/><path d="M4.4 10.4v2.5M4.4 13.6v.9" stroke="#3F2E05" stroke-width="1.1"/></svg></div>
<div class="t " style="left:121px;top:234.5px;;letter-spacing:0.387px;">utils</div>
<div class="a" style="left:80px;top:258px;width:16px;height:16px"><svg width="16" height="16" viewBox="0 0 16 16"><path d="M4.5 1.5h7l3.5 3.5v9.5h-10.5Z" fill="#F2F6FC" stroke="#93A0C0" stroke-width="1" stroke-linejoin="round"/><path d="M11.5 1.5v3.5h3.5" fill="#F1E8C8" stroke="#93A0C0" stroke-width="1" stroke-linejoin="round"/><path d="M4.5 14.5V1.5h7" fill="none" stroke="#B9AC7C" stroke-width="1"/><path d="M7.9 6.3l3.9 5.3M11.8 6.3l-3.9 5.3" stroke="#25416F" stroke-width="1.7"/><path d="M1.3 15.3Q.4 15.3 .9 14.4L3.8 8.9Q4.4 7.9 5 8.9L7.9 14.4Q8.4 15.3 7.5 15.3Z" fill="#F7CC72" stroke="#D7A046" stroke-width=".9"/><path d="M4.4 10.4v2.5M4.4 13.6v.9" stroke="#3F2E05" stroke-width="1.1"/></svg></div>
<div class="t " style="left:102px;top:257.5px;;letter-spacing:0.063px;">Books.xml</div>
<div class="a" style="left:80px;top:281px;width:16px;height:16px"><svg width="16" height="16" viewBox="0 0 16 16"><path d="M4.5 1.5h7l3.5 3.5v9.5h-10.5Z" fill="#F2F6FC" stroke="#93A0C0" stroke-width="1" stroke-linejoin="round"/><path d="M11.5 1.5v3.5h3.5" fill="#F1E8C8" stroke="#93A0C0" stroke-width="1" stroke-linejoin="round"/><path d="M4.5 14.5V1.5h7" fill="none" stroke="#B9AC7C" stroke-width="1"/><path d="M7.9 6.3l3.9 5.3M11.8 6.3l-3.9 5.3" stroke="#25416F" stroke-width="1.7"/><path d="M1.3 15.3Q.4 15.3 .9 14.4L3.8 8.9Q4.4 7.9 5 8.9L7.9 14.4Q8.4 15.3 7.5 15.3Z" fill="#F7CC72" stroke="#D7A046" stroke-width=".9"/><path d="M4.4 10.4v2.5M4.4 13.6v.9" stroke="#3F2E05" stroke-width="1.1"/></svg></div>
<div class="t " style="left:102px;top:280.5px;;letter-spacing:0.376px;">Category.xml</div>
<div class="a" style="left:80px;top:304px;width:16px;height:16px"><svg width="16" height="16" viewBox="0 0 16 16"><path d="M4.5 1.5h7l3.5 3.5v9.5h-10.5Z" fill="#F2F6FC" stroke="#93A0C0" stroke-width="1" stroke-linejoin="round"/><path d="M11.5 1.5v3.5h3.5" fill="#F1E8C8" stroke="#93A0C0" stroke-width="1" stroke-linejoin="round"/><path d="M4.5 14.5V1.5h7" fill="none" stroke="#B9AC7C" stroke-width="1"/><path d="M7.9 6.3l3.9 5.3M11.8 6.3l-3.9 5.3" stroke="#25416F" stroke-width="1.7"/><path d="M1.3 15.3Q.4 15.3 .9 14.4L3.8 8.9Q4.4 7.9 5 8.9L7.9 14.4Q8.4 15.3 7.5 15.3Z" fill="#F7CC72" stroke="#D7A046" stroke-width=".9"/><path d="M4.4 10.4v2.5M4.4 13.6v.9" stroke="#3F2E05" stroke-width="1.1"/></svg></div>
<div class="t " style="left:102px;top:303.5px;;letter-spacing:0.167px;">User.xml</div>
<div class="a" style="left:46px;top:329px;width:10px;height:12px"><svg width="10" height="12" viewBox="0 0 10 12"><path d="M3.3 3.4L7 7.2L3.3 11" fill="none" stroke="#9A9A9A" stroke-width="1.6"/></svg></div>
<div class="a" style="left:61px;top:327px;width:16px;height:16px"><svg width="18" height="16" viewBox="0 0 18 16"><rect x="2.2" y="3.4" width="6" height="1.5" fill="#1E86CC"/><rect x="2.6" y="5.1" width="6.6" height="3" fill="#3A9C7E" stroke="#2B7D62" stroke-width=".5"/><rect x="2.2" y="8.6" width="9.2" height="4.6" fill="#C9743C" stroke="#A85A28" stroke-width=".6"/><path d="M2.4 10.3h8.8" stroke="#E19A63" stroke-width=".8"/><path d="M11.2 3.2l4.4 10.3" stroke="#E8A838" stroke-width="2.4"/><path d="M10.4 3.6l4.4 10.3" stroke="#F6CF7A" stroke-width=".8"/></svg></div>
<div class="t " style="left:83px;top:326.5px;;letter-spacing:0.118px;">Libraries</div>
<div class="a" style="left:27px;top:352px;width:10px;height:12px"><svg width="10" height="12" viewBox="0 0 10 12"><path d="M3.3 3.4L7 7.2L3.3 11" fill="none" stroke="#9A9A9A" stroke-width="1.6"/></svg></div>
<div class="a" style="left:42px;top:350px;width:16px;height:16px"><svg width="18" height="16" viewBox="0 0 18 16"><rect x="2.2" y="3.4" width="6" height="1.5" fill="#1E86CC"/><rect x="2.6" y="5.1" width="6.6" height="3" fill="#3A9C7E" stroke="#2B7D62" stroke-width=".5"/><rect x="2.2" y="8.6" width="9.2" height="4.6" fill="#C9743C" stroke="#A85A28" stroke-width=".6"/><path d="M2.4 10.3h8.8" stroke="#E19A63" stroke-width=".8"/><path d="M11.2 3.2l4.4 10.3" stroke="#E8A838" stroke-width="2.4"/><path d="M10.4 3.6l4.4 10.3" stroke="#F6CF7A" stroke-width=".8"/></svg></div>
<div class="t " style="left:64px;top:349.5px;;letter-spacing:-0.18px;">JavaScript Resources</div>
<div class="a" style="left:27px;top:375px;width:10px;height:12px"><svg width="10" height="12" viewBox="0 0 10 12"><path d="M3.3 3.4L7 7.2L3.3 11" fill="none" stroke="#9A9A9A" stroke-width="1.6"/></svg></div>
<div class="a" style="left:42px;top:373px;width:16px;height:16px"><svg width="18" height="16" viewBox="0 0 18 16"><path d="M2.5 13.5V4.7q0-1.6 1.6-1.6h2.6q1 0 1.5.9l.6 1h3.4q1.1 0 1.1 1.1V8" fill="#F9E2AF" stroke="#CF8F3F" stroke-width="1" stroke-linejoin="round"/><path d="M2.4 13.6L5.4 8H16.7L13.6 13.6Z" fill="#FCEBC3" stroke="#CF8F3F" stroke-width="1" stroke-linejoin="round"/></svg></div>
<div class="t " style="left:64px;top:372.5px;;letter-spacing:0.697px;">build</div>
<div class="a" style="left:26px;top:399px;width:12px;height:10px"><svg width="12" height="10" viewBox="0 0 12 10"><path d="M2 4.2L5.8 8L9.6 4.2" fill="none" stroke="#3C3C3C" stroke-width="1.7"/></svg></div>
<div class="a" style="left:42px;top:396px;width:16px;height:16px"><svg width="18" height="16" viewBox="0 0 18 16"><path d="M2.5 13.5V4.7q0-1.6 1.6-1.6h2.6q1 0 1.5.9l.6 1h3.4q1.1 0 1.1 1.1V8" fill="#F9E2AF" stroke="#CF8F3F" stroke-width="1" stroke-linejoin="round"/><path d="M2.4 13.6L5.4 8H16.7L13.6 13.6Z" fill="#FCEBC3" stroke="#CF8F3F" stroke-width="1" stroke-linejoin="round"/><path d="M1.3 15.3Q.4 15.3 .9 14.4L3.8 8.9Q4.4 7.9 5 8.9L7.9 14.4Q8.4 15.3 7.5 15.3Z" fill="#F7CC72" stroke="#D7A046" stroke-width=".9"/><path d="M4.4 10.4v2.5M4.4 13.6v.9" stroke="#3F2E05" stroke-width="1.1"/></svg></div>
<div class="t " style="left:64px;top:395.5px;;letter-spacing:0.483px;">WebContent</div>
<div class="a" style="left:45px;top:422px;width:12px;height:10px"><svg width="12" height="10" viewBox="0 0 12 10"><path d="M2 4.2L5.8 8L9.6 4.2" fill="none" stroke="#3C3C3C" stroke-width="1.7"/></svg></div>
<div class="a" style="left:61px;top:419px;width:16px;height:16px"><svg width="18" height="16" viewBox="0 0 18 16"><path d="M2.5 13.5V4.7q0-1.6 1.6-1.6h2.6q1 0 1.5.9l.6 1h3.4q1.1 0 1.1 1.1V8" fill="#F9E2AF" stroke="#CF8F3F" stroke-width="1" stroke-linejoin="round"/><path d="M2.4 13.6L5.4 8H16.7L13.6 13.6Z" fill="#FCEBC3" stroke="#CF8F3F" stroke-width="1" stroke-linejoin="round"/></svg></div>
<div class="t " style="left:83px;top:418.5px;;letter-spacing:-0.8px;">css</div>
<div class="a" style="left:80px;top:442px;width:16px;height:16px"><svg width="16" height="16" viewBox="0 0 16 16"><path d="M4.5 1.5h7l3.5 3.5v9.5h-10.5Z" fill="#FFFEFA" stroke="#A2945C" stroke-width="1" stroke-linejoin="round"/><path d="M11.5 1.5v3.5h3.5" fill="#EFE6C4" stroke="#A2945C" stroke-width="1" stroke-linejoin="round"/><path d="M6.3 5.2h3.5M6.3 9.2h2" stroke="#E0484E" stroke-width="1.1"/><path d="M6.3 7.2h5.6M9 9.2h3" stroke="#4D6FB3" stroke-width="1.1"/><path d="M6.3 11.3h6" stroke="#3E9A5B" stroke-width="1.1"/></svg></div>
<div class="t " style="left:102px;top:441.5px;;letter-spacing:-0.19px;">add.css</div>
<div class="a" style="left:80px;top:465px;width:16px;height:16px"><svg width="16" height="16" viewBox="0 0 16 16"><path d="M4.5 1.5h7l3.5 3.5v9.5h-10.5Z" fill="#FFFEFA" stroke="#A2945C" stroke-width="1" stroke-linejoin="round"/><path d="M11.5 1.5v3.5h3.5" fill="#EFE6C4" stroke="#A2945C" stroke-width="1" stroke-linejoin="round"/><path d="M6.3 5.2h3.5M6.3 9.2h2" stroke="#E0484E" stroke-width="1.1"/><path d="M6.3 7.2h5.6M9 9.2h3" stroke="#4D6FB3" stroke-width="1.1"/><path d="M6.3 11.3h6" stroke="#3E9A5B" stroke-width="1.1"/></svg></div>
<div class="t " style="left:102px;top:464.5px;;letter-spacing:0.307px;">bootstrap.min.css</div>
<div class="a" style="left:80px;top:488px;width:16px;height:16px"><svg width="16" height="16" viewBox="0 0 16 16"><path d="M4.5 1.5h7l3.5 3.5v9.5h-10.5Z" fill="#FFFEFA" stroke="#A2945C" stroke-width="1" stroke-linejoin="round"/><path d="M11.5 1.5v3.5h3.5" fill="#EFE6C4" stroke="#A2945C" stroke-width="1" stroke-linejoin="round"/><path d="M6.3 5.2h3.5M6.3 9.2h2" stroke="#E0484E" stroke-width="1.1"/><path d="M6.3 7.2h5.6M9 9.2h3" stroke="#4D6FB3" stroke-width="1.1"/><path d="M6.3 11.3h6" stroke="#3E9A5B" stroke-width="1.1"/></svg></div>
<div class="t " style="left:102px;top:487.5px;;letter-spacing:-0.088px;">index.css</div>
<div class="a" style="left:80px;top:511px;width:16px;height:16px"><svg width="16" height="16" viewBox="0 0 16 16"><path d="M4.5 1.5h7l3.5 3.5v9.5h-10.5Z" fill="#FFFEFA" stroke="#A2945C" stroke-width="1" stroke-linejoin="round"/><path d="M11.5 1.5v3.5h3.5" fill="#EFE6C4" stroke="#A2945C" stroke-width="1" stroke-linejoin="round"/><path d="M6.3 5.2h3.5M6.3 9.2h2" stroke="#E0484E" stroke-width="1.1"/><path d="M6.3 7.2h5.6M9 9.2h3" stroke="#4D6FB3" stroke-width="1.1"/><path d="M6.3 11.3h6" stroke="#3E9A5B" stroke-width="1.1"/></svg></div>
<div class="t " style="left:102px;top:510.5px;;letter-spacing:0.144px;">login.css</div>
<div class="a" style="left:80px;top:534px;width:16px;height:16px"><svg width="16" height="16" viewBox="0 0 16 16"><path d="M4.5 1.5h7l3.5 3.5v9.5h-10.5Z" fill="#FFFEFA" stroke="#A2945C" stroke-width="1" stroke-linejoin="round"/><path d="M11.5 1.5v3.5h3.5" fill="#EFE6C4" stroke="#A2945C" stroke-width="1" stroke-linejoin="round"/><path d="M6.3 5.2h3.5M6.3 9.2h2" stroke="#E0484E" stroke-width="1.1"/><path d="M6.3 7.2h5.6M9 9.2h3" stroke="#4D6FB3" stroke-width="1.1"/><path d="M6.3 11.3h6" stroke="#3E9A5B" stroke-width="1.1"/></svg></div>
<div class="t " style="left:102px;top:533.5px;;letter-spacing:-0.08px;">reg.css</div>
<div class="a" style="left:46px;top:559px;width:10px;height:12px"><svg width="10" height="12" viewBox="0 0 10 12"><path d="M3.3 3.4L7 7.2L3.3 11" fill="none" stroke="#9A9A9A" stroke-width="1.6"/></svg></div>
<div class="a" style="left:61px;top:557px;width:16px;height:16px"><svg width="18" height="16" viewBox="0 0 18 16"><path d="M2.5 13.5V4.7q0-1.6 1.6-1.6h2.6q1 0 1.5.9l.6 1h3.4q1.1 0 1.1 1.1V8" fill="#F9E2AF" stroke="#CF8F3F" stroke-width="1" stroke-linejoin="round"/><path d="M2.4 13.6L5.4 8H16.7L13.6 13.6Z" fill="#FCEBC3" stroke="#CF8F3F" stroke-width="1" stroke-linejoin="round"/></svg></div>
<div class="t " style="left:83px;top:556.5px;;letter-spacing:1.209px;">img</div>
<div class="a" style="left:61px;top:580px;width:16px;height:16px"><svg width="18" height="16" viewBox="0 0 18 16"><path d="M2.5 13.5V4.7q0-1.6 1.6-1.6h2.6q1 0 1.5.9l.6 1h3.4q1.1 0 1.1 1.1V8" fill="#F9E2AF" stroke="#CF8F3F" stroke-width="1" stroke-linejoin="round"/><path d="M2.4 13.6L5.4 8H16.7L13.6 13.6Z" fill="#FCEBC3" stroke="#CF8F3F" stroke-width="1" stroke-linejoin="round"/></svg></div>
<div class="t " style="left:83px;top:579.5px;;letter-spacing:0.037px;">js</div>
<div class="a" style="left:46px;top:605px;width:10px;height:12px"><svg width="10" height="12" viewBox="0 0 10 12"><path d="M3.3 3.4L7 7.2L3.3 11" fill="none" stroke="#9A9A9A" stroke-width="1.6"/></svg></div>
<div class="a" style="left:61px;top:603px;width:16px;height:16px"><svg width="18" height="16" viewBox="0 0 18 16"><path d="M2.5 13.5V4.7q0-1.6 1.6-1.6h2.6q1 0 1.5.9l.6 1h3.4q1.1 0 1.1 1.1V8" fill="#F9E2AF" stroke="#CF8F3F" stroke-width="1" stroke-linejoin="round"/><path d="M2.4 13.6L5.4 8H16.7L13.6 13.6Z" fill="#FCEBC3" stroke="#CF8F3F" stroke-width="1" stroke-linejoin="round"/></svg></div>
<div class="t " style="left:83px;top:602.5px;;letter-spacing:-0.151px;">META-INF</div>
<div class="a" style="left:45px;top:629px;width:12px;height:10px"><svg width="12" height="10" viewBox="0 0 12 10"><path d="M2 4.2L5.8 8L9.6 4.2" fill="none" stroke="#3C3C3C" stroke-width="1.7"/></svg></div>
<div class="a" style="left:61px;top:626px;width:16px;height:16px"><svg width="18" height="16" viewBox="0 0 18 16"><path d="M2.5 13.5V4.7q0-1.6 1.6-1.6h2.6q1 0 1.5.9l.6 1h3.4q1.1 0 1.1 1.1V8" fill="#F9E2AF" stroke="#CF8F3F" stroke-width="1" stroke-linejoin="round"/><path d="M2.4 13.6L5.4 8H16.7L13.6 13.6Z" fill="#FCEBC3" stroke="#CF8F3F" stroke-width="1" stroke-linejoin="round"/></svg></div>
<div class="t " style="left:83px;top:625.5px;;letter-spacing:-0.8px;">WEB-INF</div>
<div class="a" style="left:64px;top:652px;width:12px;height:10px"><svg width="12" height="10" viewBox="0 0 12 10"><path d="M2 4.2L5.8 8L9.6 4.2" fill="none" stroke="#3C3C3C" stroke-width="1.7"/></svg></div>
<div class="a" style="left:80px;top:649px;width:16px;height:16px"><svg width="18" height="16" viewBox="0 0 18 16"><path d="M2.5 13.5V4.7q0-1.6 1.6-1.6h2.6q1 0 1.5.9l.6 1h3.4q1.1 0 1.1 1.1V8" fill="#F9E2AF" stroke="#CF8F3F" stroke-width="1" stroke-linejoin="round"/><path d="M2.4 13.6L5.4 8H16.7L13.6 13.6Z" fill="#FCEBC3" stroke="#CF8F3F" stroke-width="1" stroke-linejoin="round"/></svg></div>
<div class="t " style="left:102px;top:648.5px;;letter-spacing:0.373px;">jsp</div>
<div class="a" style="left:99px;top:672px;width:16px;height:16px"><svg width="16" height="16" viewBox="0 0 16 16"><path d="M4.5 1.5h7l3.5 3.5v9.5h-10.5Z" fill="#FFFEFA" stroke="#A2945C" stroke-width="1" stroke-linejoin="round"/><path d="M11.5 1.5v3.5h3.5" fill="#EFE6C4" stroke="#A2945C" stroke-width="1" stroke-linejoin="round"/><path d="M6.3 5.2h3.5M6.3 9.2h2" stroke="#E0484E" stroke-width="1.1"/><path d="M6.3 7.2h5.6M9 9.2h3" stroke="#4D6FB3" stroke-width="1.1"/><path d="M6.3 11.3h6" stroke="#3E9A5B" stroke-width="1.1"/></svg></div>
<div class="t " style="left:121px;top:671.5px;;letter-spacing:0.194px;">addBook.jsp</div>
<div class="a" style="left:99px;top:695px;width:16px;height:16px"><svg width="16" height="16" viewBox="0 0 16 16"><path d="M4.5 1.5h7l3.5 3.5v9.5h-10.5Z" fill="#FFFEFA" stroke="#A2945C" stroke-width="1" stroke-linejoin="round"/><path d="M11.5 1.5v3.5h3.5" fill="#EFE6C4" stroke="#A2945C" stroke-width="1" stroke-linejoin="round"/><path d="M6.3 5.2h3.5M6.3 9.2h2" stroke="#E0484E" stroke-width="1.1"/><path d="M6.3 7.2h5.6M9 9.2h3" stroke="#4D6FB3" stroke-width="1.1"/><path d="M6.3 11.3h6" stroke="#3E9A5B" stroke-width="1.1"/></svg></div>
<div class="t " style="left:121px;top:694.5px;;letter-spacing:0.327px;">addCategory.jsp</div>
<div class="a" style="left:99px;top:718px;width:16px;height:16px"><svg width="16" height="16" viewBox="0 0 16 16"><path d="M4.5 1.5h7l3.5 3.5v9.5h-10.5Z" fill="#FFFEFA" stroke="#A2945C" stroke-width="1" stroke-linejoin="round"/><path d="M11.5 1.5v3.5h3.5" fill="#EFE6C4" stroke="#A2945C" stroke-width="1" stroke-linejoin="round"/><path d="M6.3 5.2h3.5M6.3 9.2h2" stroke="#E0484E" stroke-width="1.1"/><path d="M6.3 7.2h5.6M9 9.2h3" stroke="#4D6FB3" stroke-width="1.1"/><path d="M6.3 11.3h6" stroke="#3E9A5B" stroke-width="1.1"/></svg></div>
<div class="t " style="left:121px;top:717.5px;;letter-spacing:0.327px;">bookList.jsp</div>
<div class="a" style="left:99px;top:741px;width:16px;height:16px"><svg width="16" height="16" viewBox="0 0 16 16"><path d="M4.5 1.5h7l3.5 3.5v9.5h-10.5Z" fill="#FFFEFA" stroke="#A2945C" stroke-width="1" stroke-linejoin="round"/><path d="M11.5 1.5v3.5h3.5" fill="#EFE6C4" stroke="#A2945C" stroke-width="1" stroke-linejoin="round"/><path d="M6.3 5.2h3.5M6.3 9.2h2" stroke="#E0484E" stroke-width="1.1"/><path d="M6.3 7.2h5.6M9 9.2h3" stroke="#4D6FB3" stroke-width="1.1"/><path d="M6.3 11.3h6" stroke="#3E9A5B" stroke-width="1.1"/></svg></div>
<div class="t " style="left:121px;top:740.5px;;letter-spacing:0.275px;">categoryList.jsp</div>
<div class="a" style="left:99px;top:764px;width:16px;height:16px"><svg width="16" height="16" viewBox="0 0 16 16"><path d="M4.5 1.5h7l3.5 3.5v9.5h-10.5Z" fill="#FFFEFA" stroke="#A2945C" stroke-width="1" stroke-linejoin="round"/><path d="M11.5 1.5v3.5h3.5" fill="#EFE6C4" stroke="#A2945C" stroke-width="1" stroke-linejoin="round"/><path d="M6.3 5.2h3.5M6.3 9.2h2" stroke="#E0484E" stroke-width="1.1"/><path d="M6.3 7.2h5.6M9 9.2h3" stroke="#4D6FB3" stroke-width="1.1"/><path d="M6.3 11.3h6" stroke="#3E9A5B" stroke-width="1.1"/></svg></div>
<div class="t " style="left:121px;top:763.5px;;letter-spacing:0.425px;">login.jsp</div>
<div class="a" style="left:99px;top:787px;width:16px;height:16px"><svg width="16" height="16" viewBox="0 0 16 16"><path d="M4.5 1.5h7l3.5 3.5v9.5h-10.5Z" fill="#FFFEFA" stroke="#A2945C" stroke-width="1" stroke-linejoin="round"/><path d="M11.5 1.5v3.5h3.5" fill="#EFE6C4" stroke="#A2945C" stroke-width="1" stroke-linejoin="round"/><path d="M6.3 5.2h3.5M6.3 9.2h2" stroke="#E0484E" stroke-width="1.1"/><path d="M6.3 7.2h5.6M9 9.2h3" stroke="#4D6FB3" stroke-width="1.1"/><path d="M6.3 11.3h6" stroke="#3E9A5B" stroke-width="1.1"/></svg></div>
<div class="t " style="left:121px;top:786.5px;;letter-spacing:0.299px;">updateBook.jsp</div>
<div class="a" style="left:65px;top:812px;width:10px;height:12px"><svg width="10" height="12" viewBox="0 0 10 12"><path d="M3.3 3.4L7 7.2L3.3 11" fill="none" stroke="#9A9A9A" stroke-width="1.6"/></svg></div>
<div class="a" style="left:80px;top:810px;width:16px;height:16px"><svg width="18" height="16" viewBox="0 0 18 16"><path d="M2.5 13.5V4.7q0-1.6 1.6-1.6h2.6q1 0 1.5.9l.6 1h3.4q1.1 0 1.1 1.1V8" fill="#F9E2AF" stroke="#CF8F3F" stroke-width="1" stroke-linejoin="round"/><path d="M2.4 13.6L5.4 8H16.7L13.6 13.6Z" fill="#FCEBC3" stroke="#CF8F3F" stroke-width="1" stroke-linejoin="round"/></svg></div>
<div class="t " style="left:102px;top:809.5px;;letter-spacing:0.992px;">lib</div>
<div class="a" style="left:79px;top:830px;width:86px;height:23px;background:#D9D9D9"></div>
<div class="a" style="left:80px;top:833px;width:16px;height:16px"><svg width="16" height="16" viewBox="0 0 16 16"><path d="M4.5 1.5h7l3.5 3.5v9.5h-10.5Z" fill="#F2F6FC" stroke="#93A0C0" stroke-width="1" stroke-linejoin="round"/><path d="M11.5 1.5v3.5h3.5" fill="#F1E8C8" stroke="#93A0C0" stroke-width="1" stroke-linejoin="round"/><path d="M4.5 14.5V1.5h7" fill="none" stroke="#B9AC7C" stroke-width="1"/><path d="M7.9 6.3l3.9 5.3M11.8 6.3l-3.9 5.3" stroke="#25416F" stroke-width="1.7"/></svg></div>
<div class="t " style="left:102px;top:832.5px;;letter-spacing:0.435px;">web.xml</div>
<div class="a" style="left:61px;top:856px;width:16px;height:16px"><svg width="16" height="16" viewBox="0 0 16 16"><path d="M4.5 1.5h7l3.5 3.5v9.5h-10.5Z" fill="#FFFEFA" stroke="#A2945C" stroke-width="1" stroke-linejoin="round"/><path d="M11.5 1.5v3.5h3.5" fill="#EFE6C4" stroke="#A2945C" stroke-width="1" stroke-linejoin="round"/><path d="M6.3 5.2h3.5M6.3 9.2h2" stroke="#E0484E" stroke-width="1.1"/><path d="M6.3 7.2h5.6M9 9.2h3" stroke="#4D6FB3" stroke-width="1.1"/><path d="M6.3 11.3h6" stroke="#3E9A5B" stroke-width="1.1"/><path d="M1.3 15.3Q.4 15.3 .9 14.4L3.8 8.9Q4.4 7.9 5 8.9L7.9 14.4Q8.4 15.3 7.5 15.3Z" fill="#F7CC72" stroke="#D7A046" stroke-width=".9"/><path d="M4.4 10.4v2.5M4.4 13.6v.9" stroke="#3F2E05" stroke-width="1.1"/></svg></div>
<div class="t " style="left:83px;top:855.5px;;letter-spacing:0.396px;">addBook.html</div>
<div class="a" style="left:61px;top:879px;width:16px;height:16px"><svg width="16" height="16" viewBox="0 0 16 16"><path d="M4.5 1.5h7l3.5 3.5v9.5h-10.5Z" fill="#FFFEFA" stroke="#A2945C" stroke-width="1" stroke-linejoin="round"/><path d="M11.5 1.5v3.5h3.5" fill="#EFE6C4" stroke="#A2945C" stroke-width="1" stroke-linejoin="round"/><path d="M6.3 5.2h3.5M6.3 9.2h2" stroke="#E0484E" stroke-width="1.1"/><path d="M6.3 7.2h5.6M9 9.2h3" stroke="#4D6FB3" stroke-width="1.1"/><path d="M6.3 11.3h6" stroke="#3E9A5B" stroke-width="1.1"/><path d="M1.3 15.3Q.4 15.3 .9 14.4L3.8 8.9Q4.4 7.9 5 8.9L7.9 14.4Q8.4 15.3 7.5 15.3Z" fill="#F7CC72" stroke="#D7A046" stroke-width=".9"/><path d="M4.4 10.4v2.5M4.4 13.6v.9" stroke="#3F2E05" stroke-width="1.1"/></svg></div>
</div>
<div class="a" style="left:457px;top:107px;width:20px;height:880px;background:#F0F0F0"></div>
<div class="a" style="left:457px;top:226px;width:20px;height:624px;background:#CDCDCD"></div>
<div class="a" style="left:461px;top:114px;width:12px;height:8px"><svg width="12" height="8" viewBox="0 0 12 8"><path d="M1.3 6.6L6 1.9l4.7 4.7" fill="none" stroke="#505050" stroke-width="2.3"/></svg></div>
<div class="a" style="left:461px;top:972px;width:12px;height:8px"><svg width="12" height="8" viewBox="0 0 12 8"><path d="M1.3 1.4L6 6.1l4.7-4.7" fill="none" stroke="#505050" stroke-width="2.3"/></svg></div>
<div class="a" style="left:487px;top:83px;width:16px;height:16px"><svg width="16" height="16" viewBox="0 0 16 16"><path d="M4.5 1.5h7l3.5 3.5v9.5h-10.5Z" fill="#F3F7FD" stroke="#9C8347" stroke-width="1" stroke-linejoin="round"/><path d="M11.5 1.5v3.5h3.5" fill="#F4E9C8" stroke="#9C8347" stroke-width="1" stroke-linejoin="round"/><path d="M11 4.2v4.6c0 2.2-1.6 3-4.2 2.6" fill="none" stroke="#2F5D9E" stroke-width="2"/></svg></div>
<div class="t " style="left:509px;top:82.5px;;letter-spacing:0.266px;">BookManagementController.java</div>
<div class="a" style="left:776px;top:75px;width:111px;height:30px;background:#fff;border:1px solid #B4BDCC;border-bottom:none;border-radius:6px 6px 0 0"></div>
<div class="a" style="left:778px;top:83px;width:16px;height:16px"><svg width="16" height="16" viewBox="0 0 16 16"><path d="M4.5 1.5h7l3.5 3.5v9.5h-10.5Z" fill="#FFFEFA" stroke="#A2945C" stroke-width="1" stroke-linejoin="round"/><path d="M11.5 1.5v3.5h3.5" fill="#EFE6C4" stroke="#A2945C" stroke-width="1" stroke-linejoin="round"/><path d="M6.3 5.2h3.5M6.3 9.2h2" stroke="#E0484E" stroke-width="1.1"/><path d="M6.3 7.2h5.6M9 9.2h3" stroke="#4D6FB3" stroke-width="1.1"/><path d="M6.3 11.3h6" stroke="#3E9A5B" stroke-width="1.1"/></svg></div>
<div class="t " style="left:799px;top:82.5px;;letter-spacing:0.362px;">login.jsp</div>
<div class="a" style="left:866px;top:86px;width:12px;height:12px"><svg width="12" height="12" viewBox="0 0 12 12"><path d="M1 2.6L2.6 1L5.5 3.9L8.4 1L10 2.6L7.1 5.5L10 8.4L8.4 10L5.5 7.1L2.6 10L1 8.4L3.9 5.5Z" fill="#fff" stroke="#585858" stroke-width=".9" stroke-linejoin="round"/></svg></div>
<div class="a" style="left:889px;top:83px;width:16px;height:16px"><svg width="16" height="16" viewBox="0 0 16 16"><path d="M4.5 1.5h7l3.5 3.5v9.5h-10.5Z" fill="#F3F7FD" stroke="#9C8347" stroke-width="1" stroke-linejoin="round"/><path d="M11.5 1.5v3.5h3.5" fill="#F4E9C8" stroke="#9C8347" stroke-width="1" stroke-linejoin="round"/><path d="M11 4.2v4.6c0 2.2-1.6 3-4.2 2.6" fill="none" stroke="#2F5D9E" stroke-width="2"/><path d="M1.3 15.3Q.4 15.3 .9 14.4L3.8 8.9Q4.4 7.9 5 8.9L7.9 14.4Q8.4 15.3 7.5 15.3Z" fill="#F7CC72" stroke="#D7A046" stroke-width=".9"/><path d="M4.4 10.4v2.5M4.4 13.6v.9" stroke="#3F2E05" stroke-width="1.1"/></svg></div>
<div class="t " style="left:910px;top:82.5px;;letter-spacing:0.31px;">ManagementController.java</div>
<div class="a" style="left:1142px;top:83px;width:16px;height:16px"><svg width="16" height="16" viewBox="0 0 16 16"><path d="M4.5 1.5h7l3.5 3.5v9.5h-10.5Z" fill="#FFFEFA" stroke="#A2945C" stroke-width="1" stroke-linejoin="round"/><path d="M11.5 1.5v3.5h3.5" fill="#EFE6C4" stroke="#A2945C" stroke-width="1" stroke-linejoin="round"/><path d="M6.3 5.2h3.5M6.3 9.2h2" stroke="#E0484E" stroke-width="1.1"/><path d="M6.3 7.2h5.6M9 9.2h3" stroke="#4D6FB3" stroke-width="1.1"/><path d="M6.3 11.3h6" stroke="#3E9A5B" stroke-width="1.1"/></svg></div>
<div class="t " style="left:1163px;top:82.5px;;letter-spacing:0.092px;">list.jsp</div>
<div class="a" style="left:1237px;top:83px;width:16px;height:16px"><svg width="16" height="16" viewBox="0 0 16 16"><path d="M4.5 1.5h7l3.5 3.5v9.5h-10.5Z" fill="#F2F6FC" stroke="#93A0C0" stroke-width="1" stroke-linejoin="round"/><path d="M11.5 1.5v3.5h3.5" fill="#F1E8C8" stroke="#93A0C0" stroke-width="1" stroke-linejoin="round"/><path d="M4.5 14.5V1.5h7" fill="none" stroke="#B9AC7C" stroke-width="1"/><path d="M7.9 6.3l3.9 5.3M11.8 6.3l-3.9 5.3" stroke="#25416F" stroke-width="1.7"/></svg></div>
<div class="t " style="left:1258px;top:82.5px;;letter-spacing:0.319px;">web.xml</div>
<div class="a" style="left:1438px;top:83px;width:12px;height:6px"><svg width="12" height="6" viewBox="0 0 12 6"><rect x="0.5" y="0.5" width="9" height="3.4" fill="#fff" stroke="#555" stroke-width="1"/></svg></div>
<div class="a" style="left:1461px;top:83px;width:12px;height:12px"><svg width="12" height="12" viewBox="0 0 12 12"><rect x="0.5" y="0.5" width="9.4" height="9" fill="#fff" stroke="#555" stroke-width="1"/><path d="M0.5 2.4h9.4" stroke="#555" stroke-width="1"/></svg></div>
<div class="a" style="left:487px;top:106px;width:12px;height:555px;background:#F8F8F8"></div>
<div class="a" style="left:499px;top:641px;width:28px;height:20px;background:#F8F8F8"></div>
<div class="a" style="left:526px;top:106px;width:1px;height:535px;background:#F3F3F3"></div>
<div class="a" style="left:1470px;top:106px;width:13.5px;height:555px;background:#F8F8F8"></div>
<div class="a" style="left:529px;top:287px;width:920px;height:20px;background:#E8F2FE"></div>
<div class="a" style="left:487px;top:289px;width:12px;height:17px;background:#8DBBEF;background-image:linear-gradient(45deg,#3F86D9 25%,transparent 25%,transparent 75%,#3F86D9 75%),linear-gradient(45deg,#3F86D9 25%,transparent 25%,transparent 75%,#3F86D9 75%);background-size:2px 2px;background-position:0 0,1px 1px"></div>
<div class="a" style="left:0;top:106px;width:1450px;height:534px;overflow:hidden">
<div class="ln" style="top:3px">1</div>
<div class="code" style="top:3px"><span class="d">&lt;%@</span><span class="n">page</span> <span class="k">contentType</span>=<span class="v">&quot;text/html;charset=utf-8&quot;</span><span class="d">%&gt;</span></div>
<div class="ln" style="top:23px">2</div>
<div class="code" style="top:23px"><span class="d">&lt;%@</span><span class="n">taglib</span> <span class="k">uri</span>=<span class="v">&quot;http://java.sun.com/jsp/jstl/core&quot;</span> <span class="k">prefix</span>=<span class="v">&quot;c&quot;</span><span class="d">%&gt;</span></div>
<div class="ln" style="top:43px">3</div>
<div class="code" style="top:43px"><span class="d">&lt;%@</span><span class="n">taglib</span> <span class="k">uri</span>=<span class="v">&quot;http://java.sun.com/jsp/jstl/fmt&quot;</span> <span class="k">prefix</span>=<span class="v">&quot;fmt&quot;</span><span class="d">%&gt;</span></div>
<div class="ln" style="top:63px">4</div>
<div class="code" style="top:63px"><span class="c">&lt;!-- </span><span class="cj c">如果登录失败，应该显示账号或密码错误</span><span class="c"> --&gt;</span></div>
<div class="ln" style="top:83px">5</div>
<div class="code" style="top:83px"><span class="b">&lt;!</span><span class="n">DOCTYPE</span> <span class="b">html&gt;</span></div>
<div class="ln" style="top:103px">6</div>
<div class="code" style="top:103px"><span class="b">&lt;</span><span class="n">html</span><span class="b">&gt;</span></div>
<div class="a" style="left:517px;top:107px;width:9px;height:9px"><svg width="9" height="9" viewBox="0 0 9 9"><circle cx="4.5" cy="4.5" r="4" fill="#D3DFEF" stroke="#8FA6C4" stroke-width="1"/><path d="M2.3 4.5h4.4" stroke="#44546F" stroke-width="1.2"/></svg></div>
<div class="ln" style="top:123px">7</div>
<div class="code" style="top:123px">    <span class="b">&lt;</span><span class="n">head</span><span class="b">&gt;</span></div>
<div class="a" style="left:517px;top:127px;width:9px;height:9px"><svg width="9" height="9" viewBox="0 0 9 9"><circle cx="4.5" cy="4.5" r="4" fill="#D3DFEF" stroke="#8FA6C4" stroke-width="1"/><path d="M2.3 4.5h4.4" stroke="#44546F" stroke-width="1.2"/></svg></div>
<div class="ln" style="top:143px">8</div>
<div class="code" style="top:143px">        <span class="b">&lt;</span><span class="n">meta</span> <span class="k">charset</span>=<span class="v">&quot;UTF-8&quot;</span><span class="b">&gt;</span></div>
<div class="ln" style="top:163px">9</div>
<div class="code" style="top:163px">        <span class="b">&lt;</span><span class="n">title</span><span class="b">&gt;</span><span class="cj ">登录</span><span class="b">&lt;/</span><span class="n">title</span><span class="b">&gt;</span></div>
<div class="ln" style="top:183px">10</div>
<div class="code" style="top:183px">        <span class="b">&lt;</span><span class="n">link</span> <span class="k">rel</span>=<span class="v">&quot;stylesheet&quot;</span> <span class="k">type</span>=<span class="v">&quot;text/css&quot;</span> <span class="k">href</span>=<span class="v">&quot;css/login.css&quot;</span><span class="b">&gt;</span></div>
<div class="ln" style="top:203px">11</div>
<div class="code" style="top:203px">    <span class="b">&lt;/</span><span class="n">head</span><span class="b">&gt;</span></div>
<div class="ln" style="top:223px">12</div>
<div class="code" style="top:223px">    <span class="b">&lt;</span><span class="n">body</span><span class="b">&gt;</span></div>
<div class="a" style="left:517px;top:227px;width:9px;height:9px"><svg width="9" height="9" viewBox="0 0 9 9"><circle cx="4.5" cy="4.5" r="4" fill="#D3DFEF" stroke="#8FA6C4" stroke-width="1"/><path d="M2.3 4.5h4.4" stroke="#44546F" stroke-width="1.2"/></svg></div>
<div class="ln" style="top:243px">13</div>
<div class="code" style="top:243px">        <span class="b">&lt;</span><span class="n">div</span> <span class="k">class</span>=<span class="v">&quot;login&quot;</span><span class="b">&gt;</span></div>
<div class="a" style="left:517px;top:247px;width:9px;height:9px"><svg width="9" height="9" viewBox="0 0 9 9"><circle cx="4.5" cy="4.5" r="4" fill="#D3DFEF" stroke="#8FA6C4" stroke-width="1"/><path d="M2.3 4.5h4.4" stroke="#44546F" stroke-width="1.2"/></svg></div>
<div class="ln" style="top:263px">14</div>
<div class="code" style="top:263px">            <span class="b">&lt;</span><span class="n">div</span> <span class="k">class</span>=<span class="v">&quot;header&quot;</span><span class="b">&gt;</span></div>
<div class="a" style="left:517px;top:267px;width:9px;height:9px"><svg width="9" height="9" viewBox="0 0 9 9"><circle cx="4.5" cy="4.5" r="4" fill="#D3DFEF" stroke="#8FA6C4" stroke-width="1"/><path d="M2.3 4.5h4.4" stroke="#44546F" stroke-width="1.2"/></svg></div>
<div class="ln" style="top:283px">15</div>
<div class="code" style="top:283px">                <span class="b">&lt;</span><span class="n">h1</span><span class="b">&gt;</span></div>
<div class="a" style="left:517px;top:287px;width:9px;height:9px"><svg width="9" height="9" viewBox="0 0 9 9"><circle cx="4.5" cy="4.5" r="4" fill="#D3DFEF" stroke="#8FA6C4" stroke-width="1"/><path d="M2.3 4.5h4.4" stroke="#44546F" stroke-width="1.2"/></svg></div>
<div class="ln" style="top:303px">16</div>
<div class="code" style="top:303px">                    <span class="b">&lt;</span><span class="n">a</span> <span class="k">href</span>=<span class="v">&quot;/login.do&quot;</span><span class="b">&gt;</span><span class="cj ">登录</span><span class="b">&lt;/</span><span class="n">a</span><span class="b">&gt;</span></div>
<div class="ln" style="top:323px">17</div>
<div class="code" style="top:323px">                <span class="b">&lt;/</span><span class="n">h1</span><span class="b">&gt;</span></div>
<div class="ln" style="top:343px">18</div>
<div class="code" style="top:343px">                <span class="b">&lt;</span><span class="n">button</span><span class="b">&gt;</span><span class="b">&lt;/</span><span class="n">button</span><span class="b">&gt;</span></div>
<div class="ln" style="top:363px">19</div>
<div class="code" style="top:363px">            <span class="b">&lt;/</span><span class="n">div</span><span class="b">&gt;</span></div>
<div class="ln" style="top:383px">20</div>
<div class="code" style="top:383px">            <span class="b">&lt;</span><span class="n">form</span> <span class="k">action</span>=<span class="v">&quot;/login.do&quot;</span> <span class="k">method</span>=<span class="v">&quot;post&quot;</span><span class="b">&gt;</span></div>
<div class="a" style="left:517px;top:387px;width:9px;height:9px"><svg width="9" height="9" viewBox="0 0 9 9"><circle cx="4.5" cy="4.5" r="4" fill="#D3DFEF" stroke="#8FA6C4" stroke-width="1"/><path d="M2.3 4.5h4.4" stroke="#44546F" stroke-width="1.2"/></svg></div>
<div class="ln" style="top:403px">21</div>
<div class="code" style="top:403px">                <span class="b">&lt;</span><span class="n">div</span> <span class="k">class</span>=<span class="v">&quot;name&quot;</span><span class="b">&gt;</span></div>
<div class="a" style="left:517px;top:407px;width:9px;height:9px"><svg width="9" height="9" viewBox="0 0 9 9"><circle cx="4.5" cy="4.5" r="4" fill="#D3DFEF" stroke="#8FA6C4" stroke-width="1"/><path d="M2.3 4.5h4.4" stroke="#44546F" stroke-width="1.2"/></svg></div>
<div class="ln" style="top:423px">22</div>
<div class="code" style="top:423px">                    <span class="b">&lt;</span><span class="n">input</span> <span class="k">type</span>=<span class="v">&quot;text&quot;</span> <span class="k">id</span>=<span class="v">&quot;name&quot;</span> <span class="k">name</span>=<span class="v">&quot;username&quot;</span><span class="b">&gt;</span></div>
<div class="ln" style="top:443px">23</div>
<div class="code" style="top:443px">                    <span class="b">&lt;</span><span class="n">p</span><span class="b">&gt;</span><span class="b">&lt;/</span><span class="n">p</span><span class="b">&gt;</span></div>
<div class="ln" style="top:463px">24</div>
<div class="code" style="top:463px">                <span class="b">&lt;/</span><span class="n">div</span><span class="b">&gt;</span></div>
<div class="ln" style="top:483px">25</div>
<div class="code" style="top:483px">                <span class="b">&lt;</span><span class="n">div</span> <span class="k">class</span>=<span class="v">&quot;pwd&quot;</span><span class="b">&gt;</span></div>
<div class="a" style="left:517px;top:487px;width:9px;height:9px"><svg width="9" height="9" viewBox="0 0 9 9"><circle cx="4.5" cy="4.5" r="4" fill="#D3DFEF" stroke="#8FA6C4" stroke-width="1"/><path d="M2.3 4.5h4.4" stroke="#44546F" stroke-width="1.2"/></svg></div>
<div class="ln" style="top:503px">26</div>
<div class="code" style="top:503px">                    <span class="b">&lt;</span><span class="n">input</span> <span class="k">type</span>=<span class="v">&quot;password&quot;</span> <span class="k">id</span>=<span class="v">&quot;pwd&quot;</span> <span class="k">name</span>=<span class="v">&quot;password&quot;</span><span class="b">&gt;</span></div>
<div class="ln" style="top:523px">27</div>
<div class="code" style="top:523px">                    <span class="b">&lt;</span><span class="n">p</span><span class="b">&gt;</span><span class="b">&lt;/</span><span class="n">p</span><span class="b">&gt;</span></div>
</div>
<div class="a" style="left:1042px;top:288px;width:2px;height:18px;background:#000"></div>
<div class="a" style="left:1450px;top:106px;width:20px;height:555px;background:#F0F0F0"></div>
<div class="a" style="left:1450px;top:128px;width:19.5px;height:364px;background:#CDCDCD"></div>
<div class="a" style="left:1453.5px;top:114px;width:12px;height:8px"><svg width="12" height="8" viewBox="0 0 12 8"><path d="M1.3 6.6L6 1.9l4.7 4.7" fill="none" stroke="#505050" stroke-width="2.3"/></svg></div>
<div class="a" style="left:1453.5px;top:626px;width:12px;height:8px"><svg width="12" height="8" viewBox="0 0 12 8"><path d="M1.3 1.4L6 6.1l4.7-4.7" fill="none" stroke="#505050" stroke-width="2.3"/></svg></div>
<div class="a" style="left:527px;top:641px;width:923px;height:20px;background:#F0F0F0"></div>
<div class="a" style="left:533px;top:645px;width:8px;height:12px"><svg width="8" height="12" viewBox="0 0 8 12"><path d="M7 1.2L2.2 6l4.8 4.8" fill="none" stroke="#ABABAB" stroke-width="2.1"/></svg></div>
<div class="a" style="left:1434px;top:645px;width:8px;height:12px"><svg width="8" height="12" viewBox="0 0 8 12"><path d="M1 1.2L5.8 6 1 10.8" fill="none" stroke="#ABABAB" stroke-width="2.1"/></svg></div>
<div class="a" style="left:1495px;top:83px;width:16px;height:16px"><svg width="16" height="16" viewBox="0 0 16 16"><rect x="1.5" y="1.5" width="5" height="5" fill="#fff" stroke="#2E62B0" stroke-width="1.2"/><rect x="1.5" y="10.5" width="5" height="4" fill="#fff" stroke="#2E62B0" stroke-width="1.2"/><rect x="8.5" y="6.5" width="2" height="2" fill="#fff" stroke="#2E62B0" stroke-width="1"/><path d="M8.5 3.5h5M12.5 7.5h2M8.5 12.5h6" stroke="#2E62B0" stroke-width="1.2"/></svg></div>
<div class="t " style="left:1515px;top:82.5px;;letter-spacing:0.233px;">Outline</div>
<div class="a" style="left:1574px;top:86px;width:12px;height:12px"><svg width="12" height="12" viewBox="0 0 12 12"><path d="M1 2.6L2.6 1L5.5 3.9L8.4 1L10 2.6L7.1 5.5L10 8.4L8.4 10L5.5 7.1L2.6 10L1 8.4L3.9 5.5Z" fill="#fff" stroke="#585858" stroke-width=".9" stroke-linejoin="round"/></svg></div>
<div class="a" style="left:1599px;top:83px;width:14px;height:16px"><svg width="14" height="16" viewBox="0 0 14 16"><path d="M2 1.5h9.5v12.5l-2.4-1.6-2.4 1.8-2.3-1.8L2 14Z" fill="#E6E6EE" stroke="#A9A9B8" stroke-width="1" stroke-linejoin="round"/><path d="M3.8 4h6M3.8 6h6M3.8 8h6M3.8 10h6" stroke="#A4A4B2" stroke-width="1"/><path d="M2.6 12.4l1.8-1 2.3 1.6 2.4-1.6 2 1.2" fill="none" stroke="#C9C4E8" stroke-width="1.2"/></svg></div>
<div class="t g" style="left:1617px;top:82.5px;;letter-spacing:-0.256px;">Task List</div>
<div class="a" style="left:1798px;top:81px;width:16px;height:16px"><svg width="16" height="16" viewBox="0 0 16 16"><circle cx="5.2" cy="4.8" r="3.1" fill="#C6C6C6"/><circle cx="4.4" cy="3.9" r="1.3" fill="#E2E2E2"/><circle cx="10.6" cy="6.2" r="3.1" fill="#BEBEBE"/><circle cx="9.8" cy="5.3" r="1.3" fill="#DCDCDC"/><circle cx="6.2" cy="10.6" r="3.4" fill="#A4A4A4"/><circle cx="5.3" cy="9.6" r="1.4" fill="#C8C8C8"/></svg></div>
<div class="a" style="left:1820px;top:81px;width:16px;height:16px"><svg width="16" height="16" viewBox="0 0 16 16"><rect x="2.5" y="1.5" width="10" height="10" fill="#E8EEF8" stroke="#8FA5C7" stroke-width="1"/><rect x="4.5" y="3.5" width="10" height="10" fill="#F6F9FF" stroke="#7A93BC" stroke-width="1"/><path d="M6.5 8.5h6" stroke="#1F4E8C" stroke-width="1.6"/></svg></div>
<div class="a" style="left:1515px;top:110px;width:16px;height:16px"><svg width="16" height="16" viewBox="0 0 16 16"><path d="M5.6 4.9L2 8.5l3.6 3.6M10.4 4.9L14 8.5l-3.6 3.6" fill="none" stroke="#25609F" stroke-width="1.15"/></svg></div>
<div class="t " style="left:1536px;top:109.5px;;letter-spacing:0.299px;">jsp:directive.page</div>
<div class="t g" style="left:1670.7px;top:109.5px;;letter-spacing:0.696px;">contentType=text/html</div>
<div class="a" style="left:1515px;top:133px;width:16px;height:16px"><svg width="16" height="16" viewBox="0 0 16 16"><path d="M5.6 4.9L2 8.5l3.6 3.6M10.4 4.9L14 8.5l-3.6 3.6" fill="none" stroke="#25609F" stroke-width="1.15"/></svg></div>
<div class="t " style="left:1536px;top:132.5px;;letter-spacing:0.391px;">jsp:directive.taglib</div>
<div class="t g" style="left:1676px;top:132.5px;;letter-spacing:0.504px;">prefix=c</div>
<div class="a" style="left:1515px;top:156px;width:16px;height:16px"><svg width="16" height="16" viewBox="0 0 16 16"><path d="M5.6 4.9L2 8.5l3.6 3.6M10.4 4.9L14 8.5l-3.6 3.6" fill="none" stroke="#25609F" stroke-width="1.15"/></svg></div>
<div class="t " style="left:1536px;top:155.5px;;letter-spacing:0.391px;">jsp:directive.taglib</div>
<div class="t g" style="left:1676px;top:155.5px;;letter-spacing:0.735px;">prefix=fmt</div>
<div class="a" style="left:1515px;top:179px;width:16px;height:16px"><svg width="16" height="16" viewBox="0 0 16 16"><path d="M5 2.4v6.2" stroke="#C9DC3A" stroke-width="3" stroke-linecap="round"/><path d="M5 2.6v5.8" stroke="#E4EE7A" stroke-width="1"/><circle cx="5" cy="12.3" r="1.7" fill="#5FA83C" stroke="#C9DC3A" stroke-width=".7"/><path d="M8.2 9.3h2.6M11.8 9.3h2.8" stroke="#26336B" stroke-width="1"/></svg></div>
<div class="t " style="left:1536px;top:178.5px;;letter-spacing:0.8px;">#comment</div>
<div class="a" style="left:1515px;top:202px;width:16px;height:16px"><svg width="16" height="16" viewBox="0 0 16 16"><path d="M1.5 0.9h6.5l3.5 3.5v9h-10Z" fill="#FEFEFE" stroke="#A89255" stroke-width="1" stroke-linejoin="round"/><path d="M8 0.9v3.5h3.5" fill="#F1E6C6" stroke="#A89255" stroke-width="1" stroke-linejoin="round"/><path d="M15.4 4.3L9.3 9.6" stroke="#B5703A" stroke-width="2.4"/><path d="M5.2 9.8l4-2.8 2.8 3.6-4 2.8Z" fill="#9A5A30" stroke="#6E3B1C" stroke-width=".7"/><path d="M6.2 13l3.6-2.6 1.2 1.6-3.6 2.6Z" fill="#C98A52" stroke="#6E3B1C" stroke-width=".6"/></svg></div>
<div class="t " style="left:1536px;top:201.5px;;letter-spacing:-0.638px;">DOCTYPE:html</div>
<div class="a" style="left:1497px;top:228px;width:12px;height:10px"><svg width="12" height="10" viewBox="0 0 12 10"><path d="M2 4.2L5.8 8L9.6 4.2" fill="none" stroke="#3C3C3C" stroke-width="1.7"/></svg></div>
<div class="a" style="left:1515px;top:225px;width:16px;height:16px"><svg width="16" height="16" viewBox="0 0 16 16"><g transform="translate(-2.3 0)"><path d="M4.5 1.5h7l3.5 3.5v9.5h-10.5Z" fill="#FDFDFF" stroke="#A89255" stroke-width="1" stroke-linejoin="round"/><path d="M11.5 1.5v3.5h3.5" fill="#F1E6C6" stroke="#A89255" stroke-width="1" stroke-linejoin="round"/><path d="M8.4 6.6L6 9.1l2.4 2.5M11 6.6l2.4 2.5L11 11.6" fill="none" stroke="#2E6BB5" stroke-width="1.2"/></g></svg></div>
<div class="t " style="left:1536px;top:224.5px;;letter-spacing:0.955px;">html</div>
<div class="a" style="left:1516px;top:251px;width:12px;height:10px"><svg width="12" height="10" viewBox="0 0 12 10"><path d="M2 4.2L5.8 8L9.6 4.2" fill="none" stroke="#3C3C3C" stroke-width="1.7"/></svg></div>
<div class="a" style="left:1534px;top:248px;width:16px;height:16px"><svg width="16" height="16" viewBox="0 0 16 16"><path d="M5.6 4.9L2 8.5l3.6 3.6M10.4 4.9L14 8.5l-3.6 3.6" fill="none" stroke="#25609F" stroke-width="1.15"/></svg></div>
<div class="t " style="left:1555px;top:247.5px;;letter-spacing:0.169px;">head</div>
<div class="a" style="left:1553px;top:271px;width:16px;height:16px"><svg width="16" height="16" viewBox="0 0 16 16"><path d="M5.6 4.9L2 8.5l3.6 3.6M10.4 4.9L14 8.5l-3.6 3.6" fill="none" stroke="#25609F" stroke-width="1.15"/></svg></div>
<div class="t " style="left:1574px;top:270.5px;;letter-spacing:0.341px;">meta</div>
<div class="t g" style="left:1615.7px;top:270.5px;;letter-spacing:-0.02px;">charset=UTF-8</div>
<div class="a" style="left:1553px;top:294px;width:16px;height:16px"><svg width="17" height="16" viewBox="0 0 17 16"><path d="M1.3 4v11" stroke="#9A8F5A" stroke-width="1"/><rect x="1.5" y="9" width="14" height="4" fill="#EAF2FC"/><rect x="1.5" y="4.3" width="14.4" height="4.6" fill="#5F9FE0" stroke="#2F6FC0" stroke-width="1"/><rect x="6.5" y="5.3" width="8.6" height="2.2" fill="#A9CCF2"/><path d="M5 2.5v8M3.6 2.5h2.8M3.6 10.5h2.8" stroke="#1F3F78" stroke-width=".9"/><path d="M15.4 9v2.6" stroke="#9A8F5A" stroke-width="1"/></svg></div>
<div class="t " style="left:1574px;top:293.5px;;letter-spacing:1.023px;">title</div>
<div class="a" style="left:1551px;top:314px;width:158px;height:23px;background:#D9D9D9"></div>
<div class="a" style="left:1553px;top:317px;width:16px;height:16px"><svg width="16" height="16" viewBox="0 0 16 16"><path d="M5.6 4.9L2 8.5l3.6 3.6M10.4 4.9L14 8.5l-3.6 3.6" fill="none" stroke="#25609F" stroke-width="1.15"/></svg></div>
<div class="t " style="left:1574px;top:316.5px;;letter-spacing:0.293px;">link rel=stylesheet</div>
<div class="a" style="left:1517px;top:342px;width:10px;height:12px"><svg width="10" height="12" viewBox="0 0 10 12"><path d="M3.3 3.4L7 7.2L3.3 11" fill="none" stroke="#9A9A9A" stroke-width="1.6"/></svg></div>
<div class="a" style="left:1534px;top:340px;width:16px;height:16px"><svg width="16" height="16" viewBox="0 0 16 16"><path d="M4.3 1.7h8.2v8.6l-3 3.2H4.3Z" fill="#FCEB7A" stroke="#A08A40" stroke-width="1" stroke-linejoin="round"/><path d="M12.5 10.3h-3v3.2" fill="#E8D36A" stroke="#A08A40" stroke-width=".8"/><rect x="4.8" y="2.2" width="7.2" height="2.6" fill="#FFFDF0"/><path d="M5.6 3.4h5.2" stroke="#3E66A8" stroke-width="1"/><rect x="4.8" y="9" width="4.4" height="3.6" fill="#FFFDF0"/><path d="M5.6 10.6h2.6" stroke="#3E66A8" stroke-width="1"/></svg></div>
<div class="t " style="left:1555px;top:339.5px;;letter-spacing:1.266px;">body</div>
<div class="a" style="left:1493px;top:641px;width:360px;height:19px;background:#F0F0F0"></div>
<div class="a" style="left:1514px;top:641px;width:340px;height:19px;background:#CDCDCD"></div>
<div class="a" style="left:1498px;top:645px;width:8px;height:12px"><svg width="8" height="12" viewBox="0 0 8 12"><path d="M6.6 1.3L1.9 6l4.7 4.7" fill="none" stroke="#505050" stroke-width="2.3"/></svg></div>
<div class="a" style="left:488px;top:676px;width:16px;height:16px"><svg width="16" height="16" viewBox="0 0 16 16"><path d="M1.5 1.5h11l1.5 2-1 4 1 7h-12.5Z" fill="#F4F4F8" stroke="#B9B9C9" stroke-width="1"/><circle cx="6" cy="5" r="2.4" fill="#E89AA2"/><path d="M3.5 14.5c0-3 1-4.5 2.5-4.5s2.5 1.5 2.5 4.5Z" fill="#F6D28C"/></svg></div>
<div class="t g" style="left:509px;top:675.5px;;letter-spacing:0.07px;">Markers</div>
<div class="a" style="left:577px;top:676px;width:16px;height:16px"><svg width="16" height="16" viewBox="0 0 16 16"><rect x="1.5" y="2.5" width="13" height="11" fill="#fff" stroke="#B5B5C5" stroke-width="1"/><path d="M1.5 5.5h13M1.5 8.5h13M1.5 11h13M6.5 5.5v8" stroke="#C9C9D6" stroke-width="1"/><path d="M1.5 3.5h13" stroke="#B5B5C5" stroke-width="2"/></svg></div>
<div class="t g" style="left:597px;top:675.5px;;letter-spacing:0.286px;">Properties</div>
<div class="a" style="left:682px;top:676px;width:16px;height:16px"><svg width="16" height="16" viewBox="0 0 16 16"><path d="M3.5 1.5v13M8 1.5v13M12.5 1.5v13" stroke="#2A4E9A" stroke-width="1.2"/><rect x="1.5" y="7" width="4" height="3.2" rx="1.2" fill="#9ACD32" stroke="#5E8A12" stroke-width=".7"/><rect x="6" y="3" width="4" height="3.2" rx="1.2" fill="#F5C242" stroke="#A87A0C" stroke-width=".7"/><rect x="10.5" y="8.5" width="4" height="3.2" rx="1.2" fill="#8FB8E8" stroke="#3C66A6" stroke-width=".7"/></svg></div>
<div class="t " style="left:701.5px;top:675.5px;;letter-spacing:-0.137px;">Servers</div>
<div class="a" style="left:762px;top:679px;width:12px;height:12px"><svg width="12" height="12" viewBox="0 0 12 12"><path d="M1 2.6L2.6 1L5.5 3.9L8.4 1L10 2.6L7.1 5.5L10 8.4L8.4 10L5.5 7.1L2.6 10L1 8.4L3.9 5.5Z" fill="#fff" stroke="#585858" stroke-width=".9" stroke-linejoin="round"/></svg></div>
<div class="a" style="left:785px;top:676px;width:16px;height:16px"><svg width="16" height="16" viewBox="0 0 16 16"><path d="M1.5 3l4-1.5 5 1.5 4-1.5v12l-4 1.5-5-1.5-4 1.5Z" fill="#DCE9C6" stroke="#A8B58C" stroke-width="1"/><path d="M5.5 1.5v12M10.5 3v12" stroke="#A8B58C" stroke-width="1"/><rect x="2" y="5" width="5" height="6" fill="#E8C27A" opacity=".85"/><rect x="9" y="4" width="4" height="4" fill="#9CC4DE" opacity=".8"/></svg></div>
<div class="t g" style="left:805px;top:675.5px;;letter-spacing:0.002px;">Data Source Explorer</div>
<div class="a" style="left:969px;top:676px;width:14px;height:16px"><svg width="14" height="16" viewBox="0 0 14 16"><path d="M1.5 1.5h6l1.5 2h3.5v11h-11Z" fill="#F4F6FB" stroke="#AAB4CC" stroke-width="1"/><path d="M3.5 7h5M3.5 9.5h6M3.5 12h4" stroke="#E8A8A8" stroke-width="1"/></svg></div>
<div class="t g" style="left:986.5px;top:675.5px;;letter-spacing:0.291px;">Snippets</div>
<div class="a" style="left:1061px;top:676px;width:16px;height:16px"><svg width="16" height="16" viewBox="0 0 16 16"><rect x="1.5" y="2.5" width="12" height="8.5" rx="1" fill="#EEF3FB" stroke="#7A95C8" stroke-width="1.4"/><path d="M4 5.5h5M4 8h7" stroke="#9AB0DA" stroke-width="1"/><path d="M4.5 13.5h6" stroke="#7A95C8" stroke-width="1.6"/></svg></div>
<div class="t g" style="left:1079.5px;top:675.5px;;letter-spacing:-0.051px;">Console</div>
<div class="a" style="left:1148px;top:676px;width:16px;height:16px"><svg width="16" height="16" viewBox="0 0 16 16"><g transform="rotate(-38 8 8)"><path d="M3 3l3 3M13 3l-3 3M1.5 8.5h3.5M14.5 8.5H11M3 14l3-3M13 14l-3-3M8 1.5v3" stroke="#A3B29C" stroke-width="1.1"/><ellipse cx="8" cy="9" rx="3.3" ry="4.3" fill="#CFE0B4" stroke="#9DB08A" stroke-width="1"/><circle cx="8" cy="4.8" r="1.6" fill="#9DB08A"/></g></svg></div>
<div class="t g" style="left:1167.5px;top:675.5px;;letter-spacing:0.286px;">Debug</div>
<div class="a" style="left:1705px;top:674px;width:16px;height:16px"><svg width="16" height="16" viewBox="0 0 16 16"><rect x="2.5" y="1.5" width="10" height="10" fill="#E8EEF8" stroke="#8FA5C7" stroke-width="1"/><rect x="4.5" y="3.5" width="10" height="10" fill="#F6F9FF" stroke="#7A93BC" stroke-width="1"/><path d="M6.5 8.5h6" stroke="#1F4E8C" stroke-width="1.6"/></svg></div>
<div class="a" style="left:1729px;top:674px;width:16px;height:16px"><svg width="16" height="16" viewBox="0 0 16 16"><g transform="rotate(-38 8 8)"><path d="M3 3l3 3M13 3l-3 3M1.5 8.5h3.5M14.5 8.5H11M3 14l3-3M13 14l-3-3M8 1.5v3" stroke="#1F5A55" stroke-width="1.1"/><ellipse cx="8" cy="9" rx="3.3" ry="4.3" fill="#9DBF8E" stroke="#2F6B5E" stroke-width="1"/><circle cx="8" cy="4.8" r="1.6" fill="#2F6B5E"/><ellipse cx="7" cy="8" rx="1.2" ry="2.2" fill="#D7F0C8"/></g></svg></div>
<div class="a" style="left:1751px;top:673px;width:16px;height:16px"><svg width="16" height="16" viewBox="0 0 16 16"><circle cx="8" cy="8" r="6.7" fill="#46A33C" stroke="#2B7A2B" stroke-width="1"/><circle cx="8" cy="6.6" r="4.7" fill="#7BCF63" opacity=".5"/><path d="M5.8 3.7L12 8l-6.2 4.3Z" fill="#fff"/></svg></div>
<div class="a" style="left:1774px;top:673px;width:18px;height:16px"><svg width="18" height="16" viewBox="0 0 18 16"><path d="M1 15V8l7 3.5Z" fill="#3FA535" stroke="#2A7F2A" stroke-width=".6"/><circle cx="8.5" cy="7" r="4" fill="#fff" stroke="#2A5FA8" stroke-width="1.3"/><path d="M8.5 4.5V7l2 1.2" fill="none" stroke="#2A5FA8" stroke-width="1"/><path d="M6.5 1.2l4 0M8.5 1.2v1.8" stroke="#2A5FA8" stroke-width="1.1"/><path d="M12 1.5h5M13 3.5h4M14 5.5h3" stroke="#6F8FC8" stroke-width=".9"/></svg></div>
<div class="a" style="left:1800px;top:676px;width:12px;height:12px"><svg width="12" height="12" viewBox="0 0 12 12"><rect x="0.5" y="0.5" width="11" height="11" rx="1" fill="#E8283C" stroke="#C4142A" stroke-width="1"/><rect x="2" y="2" width="8" height="4" fill="#F25566" opacity=".5"/></svg></div>
<div class="a" style="left:1820px;top:673px;width:18px;height:18px"><svg width="18" height="18" viewBox="0 0 18 18"><rect x="1.5" y="4.5" width="8" height="12" fill="#E6E2C8" stroke="#A59F78" stroke-width="1"/><rect x="3" y="6" width="5" height="2.5" fill="#7DB36B"/><rect x="3" y="10" width="5" height="2" fill="#fff" stroke="#A59F78" stroke-width=".5"/><rect x="3" y="13" width="5" height="2" fill="#9FB4DA"/><path d="M9.5 3.5h4l2 2v7h-6Z" fill="#FFFBE6" stroke="#B8A25A" stroke-width="1"/><path d="M11.5 1.5h4l2 2v7h-2" fill="#FFFBE6" stroke="#B8A25A" stroke-width="1"/><path d="M11 7h3M11 9h3" stroke="#8FA5D8" stroke-width=".8"/></svg></div>
<div class="a" style="left:492px;top:706px;width:10px;height:12px"><svg width="10" height="12" viewBox="0 0 10 12"><path d="M3.3 3.4L7 7.2L3.3 11" fill="none" stroke="#9A9A9A" stroke-width="1.6"/></svg></div>
<div class="a" style="left:507px;top:700px;width:413px;height:23px;background:#D9D9D9"></div>
<div class="a" style="left:511px;top:703px;width:16px;height:18px"><svg width="16" height="18" viewBox="0 0 16 18"><rect x="1.5" y="1.5" width="8" height="13" fill="#EFECD8" stroke="#8F8A66" stroke-width="1"/><rect x="3" y="3" width="5" height="2.6" fill="#2E8B2E"/><rect x="3" y="7" width="5" height="2" fill="#fff" stroke="#A59F78" stroke-width=".5"/><rect x="3" y="10.5" width="5" height="2.6" fill="#A9B8E4"/><path d="M12 10.5v7M8.5 14h7M9.5 11.5l5 5M14.5 11.5l-5 5" stroke="#1F6B5A" stroke-width="1.1"/><circle cx="12" cy="14" r="1.3" fill="#E8F5E0"/></svg></div>
<div class="t " style="left:530.5px;top:702.5px;;letter-spacing:0.166px;">Tomcat v8.5 Server at localhost  [Debugging, Restart]</div>
<div class="a" style="left:1258px;top:990px;width:1px;height:20px;background:#9aa0b0"></div>
<div class="a" style="left:1377px;top:990px;width:1px;height:20px;background:#9aa0b0"></div>
<div class="a" style="left:1489px;top:990px;width:1px;height:20px;background:#9aa0b0"></div>
<div class="t " style="left:1266px;top:991.5px;;letter-spacing:0.487px;">Writable</div>
<div class="t " style="left:1385.5px;top:991.5px;;letter-spacing:0.051px;">Smart Insert</div>
<div class="t " style="left:1497px;top:991.5px;;letter-spacing:-0.056px;">10 : 58</div>
<div class="a" style="left:1600px;top:995px;width:1px;height:15px;background:repeating-linear-gradient(#9A8F7A 0 2px,transparent 2px 4px)"></div>
<div class="a" style="left:1793px;top:927px;width:60px;height:53px;background:#474747;border-radius:3px"></div>
<div class="t " style="left:1802px;top:932.5px;font-family:DejaVu Sans,sans-serif;font-size:16px;font-weight:bold;color:#F0A030;">↑</div>
<div class="t " style="left:1821px;top:933.0px;font-size:15.5px;color:#F0A030;">0.0</div>
<div class="t " style="left:1802px;top:955.5px;font-family:DejaVu Sans,sans-serif;font-size:16px;font-weight:bold;color:#7CD827;">↓</div>
<div class="t " style="left:1821px;top:956.0px;font-size:15.5px;color:#7CD827;">0.0</div>
</body></html>
